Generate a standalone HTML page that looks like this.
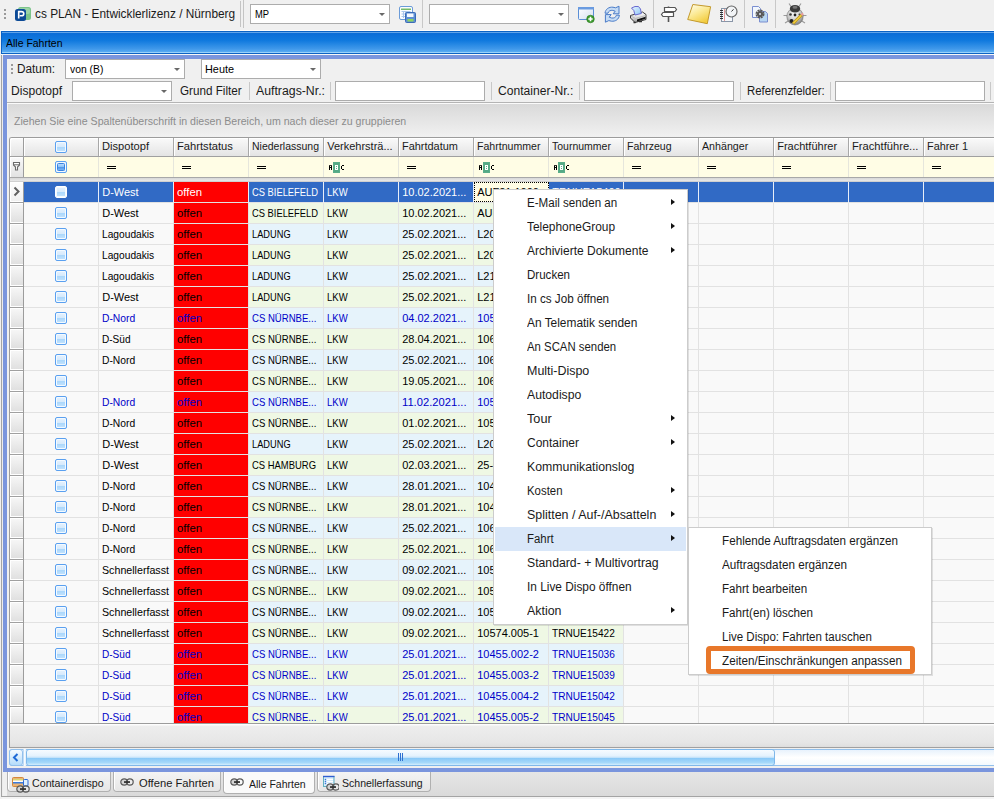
<!DOCTYPE html><html><head><meta charset="utf-8"><style>
*{margin:0;padding:0;box-sizing:border-box}
html,body{width:994px;height:799px;overflow:hidden;background:#f0f0f0;font-family:"Liberation Sans",sans-serif;color:#000;position:relative}
.a{position:absolute;display:block}
.t{position:absolute;white-space:nowrap;line-height:1}
.sep{position:absolute;width:2px;border-left:1px solid #c8c8c8;border-right:1px solid #fff}
.combo{position:absolute;background:#fff;border:1px solid #acacac}
.arr{position:absolute;width:0;height:0;border-left:3.5px solid transparent;border-right:3.5px solid transparent;border-top:3.5px solid #686868}
.cb{position:absolute;width:12px;height:12px;border:1px solid #5aa0f0;border-radius:2px;background:linear-gradient(#e6f2fe,#d6eafc 50%,#acd8fc 55%,#c6e4fd);box-shadow:inset 0 0 0 1px #f4faff}
.eq{position:absolute;width:9px;height:4px;border-top:1.5px solid #000;border-bottom:1.5px solid #000}
.mar{position:absolute;width:0;height:0;border-top:3.5px solid transparent;border-bottom:3.5px solid transparent;border-left:4px solid #111}
</style></head><body>
<div class="a" style="left:4px;top:9px;width:2px;height:2px;background:#9a9a9a"></div>
<div class="a" style="left:4px;top:13px;width:2px;height:2px;background:#9a9a9a"></div>
<div class="a" style="left:4px;top:17px;width:2px;height:2px;background:#9a9a9a"></div>
<svg class="a" style="left:14px;top:6px" width="18" height="16" viewBox="0 0 18 16"><rect x="4" y="1" width="13" height="13" rx="2.5" fill="#7cc48a"/><rect x="5" y="2" width="11" height="6" rx="2" fill="#a8dcb2" opacity=".7"/><rect x="1" y="3" width="11" height="12" rx="2.5" fill="#0c4a96"/><path d="M4.7 12.5V5.6h2.6c1.6 0 2.5.8 2.5 2.1s-.9 2.1-2.5 2.1H5.8" fill="none" stroke="#fff" stroke-width="1.6"/></svg>
<div class="t" style="left:35px;top:9px;font-size:11.85px;color:#1a1a1a;">cs PLAN - Entwicklerlizenz / Nürnberg</div>
<div class="a" style="left:240px;top:1px;width:1px;height:26px;background:#c4c4c4"></div>
<div class="a" style="left:243px;top:0px;width:1px;height:28px;background:#c4c4c4"></div>
<div class="combo" style="left:250px;top:4px;width:140px;height:20px"></div>
<div class="t" style="left:255px;top:9px;font-size:11.5px;color:#000;transform:scaleX(0.8116);transform-origin:0 0;">MP</div>
<div class="arr" style="left:379px;top:13px"></div>
<svg class="a" style="left:398px;top:5px" width="19" height="19" viewBox="0 0 19 19"><rect x="1.5" y="1.5" width="13" height="13" rx="1.5" fill="#fbfdff" stroke="#6b9bd8"/><rect x="3" y="3.5" width="10" height="1.5" fill="#76bb6a"/><path d="M3.5 6.5h9M3.5 9h9M3.5 11.5h9M5.5 6v7M8 6v7" stroke="#a9c6ec" stroke-width="1"/><rect x="7.5" y="7.5" width="10" height="10" rx="1" fill="#5d8fd4" stroke="#3a6ab8"/><rect x="9" y="8.5" width="6.5" height="3.5" fill="#f4f8ff"/><rect x="9.5" y="14" width="6" height="2.5" fill="#8fd45c"/></svg>
<div class="a" style="left:422px;top:0px;width:1px;height:28px;background:#c8c8c8"></div>
<div class="combo" style="left:429px;top:4px;width:140px;height:20px"></div>
<div class="arr" style="left:558px;top:13px"></div>
<svg class="a" style="left:577px;top:6px" width="19" height="18" viewBox="0 0 19 18"><defs><linearGradient id="wg" x1="0" y1="0" x2="1" y2="1"><stop offset="0" stop-color="#fff"/><stop offset="1" stop-color="#d4dff0"/></linearGradient></defs><rect x="1.5" y="1.5" width="15" height="12" rx="1" fill="url(#wg)" stroke="#5a8ed6"/><rect x="1" y="1" width="16" height="2.5" fill="#6a9be0"/><circle cx="13.5" cy="13" r="3.8" fill="#3c9a2e" stroke="#2a7a1e" stroke-width=".6"/><path d="M13.5 10.8v4.4M11.3 13h4.4" stroke="#fff" stroke-width="1.6"/></svg>
<svg class="a" style="left:603px;top:5px" width="18" height="18" viewBox="0 0 18 18"><path d="M2 8.2C2.4 4 6 1.8 10 2.2l2.6.6 3.4-1.6v7.6h-5.8l2-2.6-2.4-.8C7.6 5 5.4 6 5 8.2z" fill="#c6dcf5" stroke="#4a7cc8" stroke-width="1" stroke-linejoin="round"/><g transform="rotate(180 9.2 9.2)"><path d="M2 8.2C2.4 4 6 1.8 10 2.2l2.6.6 3.4-1.6v7.6h-5.8l2-2.6-2.4-.8C7.6 5 5.4 6 5 8.2z" fill="#c6dcf5" stroke="#4a7cc8" stroke-width="1" stroke-linejoin="round"/></g></svg>
<svg class="a" style="left:629px;top:5px" width="19" height="19" viewBox="0 0 19 19"><defs><linearGradient id="pg" x1="0" y1="0" x2="0" y2="1"><stop offset="0" stop-color="#ffffff"/><stop offset=".5" stop-color="#dedede"/><stop offset="1" stop-color="#9a9a9a"/></linearGradient><linearGradient id="pp" x1="0" y1="0" x2="1" y2="1"><stop offset="0" stop-color="#e8f6ff"/><stop offset="1" stop-color="#8cc4f4"/></linearGradient></defs><path d="M1.5 10.5L13.5 7l3.5 2.5v5L6 17.5 1.5 13z" fill="url(#pg)" stroke="#3a3a3a" stroke-width="1" stroke-linejoin="round"/><path d="M2.5 3L6 1.5h3.5l2 2.5.8 4.5-6.3 1.5-1.2-4.5z" fill="url(#pp)" stroke="#6a6ad0" stroke-width="1" stroke-linejoin="round"/><path d="M2 11l4.5 2.5L16.5 10.5" fill="none" stroke="#bbb" stroke-width="1"/><path d="M8 14.5l8.5-2.8v2L8 16.5z" fill="#111"/><path d="M4.5 17.5h2M10 16.5h3" stroke="#333" stroke-width="1.3"/></svg>
<div class="a" style="left:653px;top:0px;width:1px;height:28px;background:#c8c8c8"></div>
<svg class="a" style="left:660px;top:5px" width="18" height="18" viewBox="0 0 18 18"><path d="M8.5 1.5v15.5" stroke="#555" stroke-width="1.6"/><path d="M4.5 2.5h10.5l1.5 2-1.5 2h-10.5z" fill="#fff" stroke="#555" stroke-width="1.2"/><path d="M3 7.5h10.5v4h-10.5l-1.5-2z" fill="#fff" stroke="#555" stroke-width="1.2"/></svg>
<svg class="a" style="left:686px;top:3px" width="27" height="22" viewBox="0 0 27 22"><defs><linearGradient id="sg" x1="0" y1="0" x2="0.6" y2="1"><stop offset="0" stop-color="#fffef2"/><stop offset=".5" stop-color="#fbea96"/><stop offset="1" stop-color="#f2cc3e"/></linearGradient></defs><path d="M6.8 1.5l17.8 2.2-3.3 17-19.6-4.2z" fill="url(#sg)" stroke="#c49a2c" stroke-width="1"/></svg>
<svg class="a" style="left:719px;top:5px" width="20" height="18" viewBox="0 0 20 18"><rect x="2.5" y="3.5" width="11" height="13" fill="#f6f8fb" stroke="#8a96a8"/><path d="M1 5.5h3M1 7.5h3M1 9.5h3M1 11.5h3M1 13.5h3" stroke="#333" stroke-width="1"/><path d="M5.5 4v12" stroke="#e08080" stroke-width=".8"/><circle cx="12.5" cy="6.5" r="5.5" fill="#f2f4f6" stroke="#666" stroke-width="1.2"/><path d="M12.5 6.5l2-2.2" stroke="#333" stroke-width="1"/></svg>
<div class="a" style="left:744px;top:0px;width:1px;height:28px;background:#c8c8c8"></div>
<svg class="a" style="left:751px;top:5px" width="18" height="18" viewBox="0 0 18 18"><path d="M1.5 1.5h6l2 2v9h-8z" fill="#f2f7fd" stroke="#7a8ed0"/><path d="M8.5 6.5h6l2 2v8.5h-8z" fill="#b7d6f2" stroke="#7a8ed0"/><circle cx="9" cy="9" r="3.1" fill="#585858"/><circle cx="9" cy="9" r="3.7" fill="none" stroke="#585858" stroke-width="1.6" stroke-dasharray="2.1 0.8"/><circle cx="9" cy="9" r="1" fill="#dfe6f0"/></svg>
<div class="a" style="left:775px;top:0px;width:1px;height:28px;background:#c8c8c8"></div>
<svg class="a" style="left:782px;top:2px" width="26" height="24" viewBox="0 0 26 24"><defs><radialGradient id="bgr" cx=".45" cy=".35" r=".75"><stop offset="0" stop-color="#ffffff"/><stop offset=".55" stop-color="#c4c4c4"/><stop offset="1" stop-color="#5a5a5a"/></radialGradient></defs><path d="M7 1.5l3 4.5M19 1.5l-3 4.5M1.5 13.5h5M24.5 13.5h-5M3 21l4-2.5M23 21l-4-2.5" stroke="#9a9a9a" stroke-width="1.1"/><ellipse cx="13" cy="14.5" rx="8.2" ry="8.5" fill="url(#bgr)" stroke="#777" stroke-width=".6"/><ellipse cx="13" cy="6.8" rx="5.2" ry="3.8" fill="#3a3a3a"/><ellipse cx="13" cy="5.2" rx="2.5" ry="1.5" fill="#777"/><circle cx="8.5" cy="12.5" r="1.3" fill="#333"/><circle cx="13" cy="13" r="1.4" fill="#222"/><circle cx="9.5" cy="19" r="2" fill="#222"/><circle cx="17.5" cy="12.5" r="1" fill="#444"/><path d="M11 21.5l8.5-8.5" stroke="#b58f1a" stroke-width="3"/><path d="M11.3 21.2l8-8" stroke="#f2d040" stroke-width="1.6"/><path d="M19.5 13l1.5-1.5" stroke="#e99" stroke-width="2.2"/></svg>
<div class="a" style="left:1px;top:31px;width:995px;height:23px;border:1px solid #0c62c4;background:linear-gradient(#0a6ad6,#1079de 40%,#3f98ea 80%,#62b2f4);box-shadow:inset 0 1px 0 #62a4ea,inset 0 -1px 0 #9ad2fa"></div>
<div class="a" style="left:1px;top:54px;width:995px;height:1px;background:#f6f6f6"></div>
<div class="a" style="left:0px;top:30px;width:995px;height:1px;background:#fcfcfc"></div>
<div class="t" style="left:6px;top:38px;font-size:11px;color:#000;transform:scaleX(0.9526);transform-origin:0 0;">Alle Fahrten</div>
<div class="a" style="left:1px;top:55px;width:1px;height:742px;background:#a4a4a4"></div>
<div class="a" style="left:1px;top:796px;width:995px;height:1px;background:#a4a4a4"></div>
<div class="a" style="left:2px;top:797px;width:995px;height:2px;background:#f4f4f4"></div>
<div class="a" style="left:2px;top:55px;width:1px;height:741px;background:#ececec"></div>
<div class="a" style="left:3px;top:55px;width:995px;height:717px;background:#7a95dd"></div>
<div class="a" style="left:7px;top:59px;width:995px;height:709px;background:#f0f0f0"></div>
<div class="a" style="left:11px;top:64px;width:2px;height:2px;background:#9a9a9a"></div>
<div class="a" style="left:11px;top:68px;width:2px;height:2px;background:#9a9a9a"></div>
<div class="a" style="left:11px;top:72px;width:2px;height:2px;background:#9a9a9a"></div>
<div class="t" style="left:17px;top:63px;font-size:12px;color:#1a1a1a;transform:scaleX(0.9825);transform-origin:0 0;">Datum:</div>
<div class="combo" style="left:65px;top:59px;width:120px;height:20px"></div>
<div class="t" style="left:70px;top:64px;font-size:11.5px;color:#000;transform:scaleX(0.9011);transform-origin:0 0;">von (B)</div>
<div class="arr" style="left:174px;top:68px"></div>
<div class="combo" style="left:201px;top:59px;width:120px;height:20px"></div>
<div class="t" style="left:205px;top:64px;font-size:11.5px;color:#000;transform:scaleX(0.9450);transform-origin:0 0;">Heute</div>
<div class="arr" style="left:310px;top:68px"></div>
<div class="t" style="left:11px;top:85px;font-size:12px;color:#1a1a1a;transform:scaleX(1.0060);transform-origin:0 0;">Dispotopf</div>
<div class="combo" style="left:72px;top:81px;width:100px;height:20px"></div>
<div class="arr" style="left:161px;top:90px"></div>
<div class="t" style="left:180px;top:85px;font-size:12px;color:#1a1a1a;transform:scaleX(0.9723);transform-origin:0 0;">Grund Filter</div>
<div class="a" style="left:249px;top:82px;width:1px;height:18px;background:#c8c8c8"></div>
<div class="t" style="left:256px;top:85px;font-size:12px;color:#1a1a1a;transform:scaleX(1.0244);transform-origin:0 0;">Auftrags-Nr.:</div>
<div class="a" style="left:330px;top:82px;width:1px;height:18px;background:#c8c8c8"></div>
<div class="combo" style="left:335px;top:81px;width:150px;height:20px"></div>
<div class="a" style="left:491px;top:82px;width:1px;height:18px;background:#c8c8c8"></div>
<div class="t" style="left:498px;top:85px;font-size:12px;color:#1a1a1a;transform:scaleX(1.0081);transform-origin:0 0;">Container-Nr.:</div>
<div class="a" style="left:579px;top:82px;width:1px;height:18px;background:#c8c8c8"></div>
<div class="combo" style="left:584px;top:81px;width:150px;height:20px"></div>
<div class="a" style="left:740px;top:82px;width:1px;height:18px;background:#c8c8c8"></div>
<div class="t" style="left:747px;top:85px;font-size:12px;color:#1a1a1a;transform:scaleX(0.9470);transform-origin:0 0;">Referenzfelder:</div>
<div class="a" style="left:830px;top:82px;width:1px;height:18px;background:#c8c8c8"></div>
<div class="combo" style="left:835px;top:81px;width:150px;height:20px"></div>
<div class="a" style="left:990px;top:82px;width:1px;height:18px;background:#c8c8c8"></div>
<div class="a" style="left:7px;top:102px;width:995px;height:1px;background:#b4b4b4"></div>
<div class="a" style="left:7px;top:103px;width:995px;height:1px;background:#fafafa"></div>
<div class="a" style="left:8px;top:104px;width:995px;height:33px;background:linear-gradient(#d9d9d9,#f1f1f1)"></div>
<div class="t" style="left:14px;top:116px;font-size:10.6px;color:#8c8c8c;">Ziehen Sie eine Spaltenüberschrift in diesen Bereich, um nach dieser zu gruppieren</div>
<div class="a" style="left:9px;top:137px;width:995px;height:587px;background:#f9f9f9;border-top:1px solid #9c9c9c;border-left:1px solid #9c9c9c;border-radius:3px 0 0 0"></div>
<div class="a" style="left:10px;top:138px;width:13px;height:18px;background:linear-gradient(#fafafa,#f0f0f0 45%,#e4e4e4);box-shadow:inset 1px 1px 0 #fff;border-top-left-radius:2px"></div>
<div class="a" style="left:23px;top:138px;width:1px;height:19px;background:#9c9c9c"></div>
<div class="a" style="left:24px;top:138px;width:74px;height:18px;background:linear-gradient(#fafafa,#f0f0f0 45%,#e4e4e4);box-shadow:inset 1px 1px 0 #fff"></div>
<div class="a" style="left:98px;top:138px;width:1px;height:18px;background:#a8a8a8"></div>
<div class="a" style="left:99px;top:138px;width:74px;height:18px;background:linear-gradient(#fafafa,#f0f0f0 45%,#e4e4e4);box-shadow:inset 1px 1px 0 #fff"></div>
<div class="a" style="left:173px;top:138px;width:1px;height:18px;background:#a8a8a8"></div>
<div class="t" style="left:102.2px;top:141px;font-size:11px;color:#1a1a1a;transform:scaleX(1.0114);transform-origin:0 0;">Dispotopf</div>
<div class="a" style="left:174px;top:138px;width:74px;height:18px;background:linear-gradient(#fafafa,#f0f0f0 45%,#e4e4e4);box-shadow:inset 1px 1px 0 #fff"></div>
<div class="a" style="left:248px;top:138px;width:1px;height:18px;background:#a8a8a8"></div>
<div class="t" style="left:177.2px;top:141px;font-size:11px;color:#1a1a1a;transform:scaleX(1.0160);transform-origin:0 0;">Fahrtstatus</div>
<div class="a" style="left:249px;top:138px;width:74px;height:18px;background:linear-gradient(#fafafa,#f0f0f0 45%,#e4e4e4);box-shadow:inset 1px 1px 0 #fff"></div>
<div class="a" style="left:323px;top:138px;width:1px;height:18px;background:#a8a8a8"></div>
<div class="t" style="left:252.2px;top:141px;font-size:11px;color:#1a1a1a;transform:scaleX(0.9528);transform-origin:0 0;">Niederlassung</div>
<div class="a" style="left:324px;top:138px;width:74px;height:18px;background:linear-gradient(#fafafa,#f0f0f0 45%,#e4e4e4);box-shadow:inset 1px 1px 0 #fff"></div>
<div class="a" style="left:398px;top:138px;width:1px;height:18px;background:#a8a8a8"></div>
<div class="t" style="left:327.2px;top:141px;font-size:11px;color:#1a1a1a;">Verkehrsträ...</div>
<div class="a" style="left:399px;top:138px;width:74px;height:18px;background:linear-gradient(#fafafa,#f0f0f0 45%,#e4e4e4);box-shadow:inset 1px 1px 0 #fff"></div>
<div class="a" style="left:473px;top:138px;width:1px;height:18px;background:#a8a8a8"></div>
<div class="t" style="left:402.2px;top:141px;font-size:11px;color:#1a1a1a;transform:scaleX(0.9938);transform-origin:0 0;">Fahrtdatum</div>
<div class="a" style="left:474px;top:138px;width:74px;height:18px;background:linear-gradient(#fafafa,#f0f0f0 45%,#e4e4e4);box-shadow:inset 1px 1px 0 #fff"></div>
<div class="a" style="left:548px;top:138px;width:1px;height:18px;background:#a8a8a8"></div>
<div class="t" style="left:477.2px;top:141px;font-size:11px;color:#1a1a1a;transform:scaleX(0.9603);transform-origin:0 0;">Fahrtnummer</div>
<div class="a" style="left:549px;top:138px;width:74px;height:18px;background:linear-gradient(#fafafa,#f0f0f0 45%,#e4e4e4);box-shadow:inset 1px 1px 0 #fff"></div>
<div class="a" style="left:623px;top:138px;width:1px;height:18px;background:#a8a8a8"></div>
<div class="t" style="left:552.2px;top:141px;font-size:11px;color:#1a1a1a;transform:scaleX(0.9539);transform-origin:0 0;">Tournummer</div>
<div class="a" style="left:624px;top:138px;width:74px;height:18px;background:linear-gradient(#fafafa,#f0f0f0 45%,#e4e4e4);box-shadow:inset 1px 1px 0 #fff"></div>
<div class="a" style="left:698px;top:138px;width:1px;height:18px;background:#a8a8a8"></div>
<div class="t" style="left:627.2px;top:141px;font-size:11px;color:#1a1a1a;transform:scaleX(0.9597);transform-origin:0 0;">Fahrzeug</div>
<div class="a" style="left:699px;top:138px;width:74px;height:18px;background:linear-gradient(#fafafa,#f0f0f0 45%,#e4e4e4);box-shadow:inset 1px 1px 0 #fff"></div>
<div class="a" style="left:773px;top:138px;width:1px;height:18px;background:#a8a8a8"></div>
<div class="t" style="left:702.2px;top:141px;font-size:11px;color:#1a1a1a;transform:scaleX(0.9684);transform-origin:0 0;">Anhänger</div>
<div class="a" style="left:774px;top:138px;width:74px;height:18px;background:linear-gradient(#fafafa,#f0f0f0 45%,#e4e4e4);box-shadow:inset 1px 1px 0 #fff"></div>
<div class="a" style="left:848px;top:138px;width:1px;height:18px;background:#a8a8a8"></div>
<div class="t" style="left:777.2px;top:141px;font-size:11px;color:#1a1a1a;">Frachtführer</div>
<div class="a" style="left:849px;top:138px;width:74px;height:18px;background:linear-gradient(#fafafa,#f0f0f0 45%,#e4e4e4);box-shadow:inset 1px 1px 0 #fff"></div>
<div class="a" style="left:923px;top:138px;width:1px;height:18px;background:#a8a8a8"></div>
<div class="t" style="left:852.2px;top:141px;font-size:11px;color:#1a1a1a;transform:scaleX(1.0150);transform-origin:0 0;">Frachtführe...</div>
<div class="a" style="left:924px;top:138px;width:74px;height:18px;background:linear-gradient(#fafafa,#f0f0f0 45%,#e4e4e4);box-shadow:inset 1px 1px 0 #fff"></div>
<div class="a" style="left:998px;top:138px;width:1px;height:18px;background:#a8a8a8"></div>
<div class="t" style="left:927.2px;top:141px;font-size:11px;color:#1a1a1a;transform:scaleX(0.9862);transform-origin:0 0;">Fahrer 1</div>
<div class="a" style="left:10px;top:156px;width:995px;height:1px;background:#a0a0a0"></div>
<div class="cb" style="left:55px;top:141px"></div>
<div class="a" style="left:10px;top:157px;width:13px;height:20px;background:linear-gradient(#fafafa,#e2e2e2);box-shadow:inset 1px 1px 0 #fff"></div>
<div class="a" style="left:23px;top:157px;width:1px;height:20px;background:#9c9c9c"></div>
<svg class="a" style="left:12px;top:161px" width="9" height="10" viewBox="0 0 9 10"><path d="M1.5 1.5h6v2.5l-2 2v3h-2v-3l-2-2z" fill="#fff" stroke="#6a6a6a" stroke-width="1.1"/><path d="M1.5 3.8h6" stroke="#6a6a6a" stroke-width="1"/></svg>
<div class="a" style="left:24px;top:157px;width:995px;height:20px;background:#fffde5"></div>
<div class="a" style="left:98px;top:157px;width:1px;height:20px;background:#e6e6dc"></div>
<div class="a" style="left:173px;top:157px;width:1px;height:20px;background:#e6e6dc"></div>
<div class="a" style="left:248px;top:157px;width:1px;height:20px;background:#e6e6dc"></div>
<div class="a" style="left:323px;top:157px;width:1px;height:20px;background:#e6e6dc"></div>
<div class="a" style="left:398px;top:157px;width:1px;height:20px;background:#e6e6dc"></div>
<div class="a" style="left:473px;top:157px;width:1px;height:20px;background:#e6e6dc"></div>
<div class="a" style="left:548px;top:157px;width:1px;height:20px;background:#e6e6dc"></div>
<div class="a" style="left:623px;top:157px;width:1px;height:20px;background:#e6e6dc"></div>
<div class="a" style="left:698px;top:157px;width:1px;height:20px;background:#e6e6dc"></div>
<div class="a" style="left:773px;top:157px;width:1px;height:20px;background:#e6e6dc"></div>
<div class="a" style="left:848px;top:157px;width:1px;height:20px;background:#e6e6dc"></div>
<div class="a" style="left:923px;top:157px;width:1px;height:20px;background:#e6e6dc"></div>
<div class="a" style="left:998px;top:157px;width:1px;height:20px;background:#e6e6dc"></div>
<div class="cb" style="left:55px;top:161px"></div>
<div class="a" style="left:57px;top:163px;width:8px;height:8px;background:linear-gradient(#b8dafc,#8cc4f8 45%,#4f96ea 55%,#78b4f4);border:1px solid #3a84e0;border-radius:1.5px"></div>
<div class="a" style="left:107px;top:166px;width:9px;height:1px;background:#000"></div>
<div class="a" style="left:107px;top:168px;width:9px;height:1px;background:#000"></div>
<div class="a" style="left:182px;top:166px;width:9px;height:1px;background:#000"></div>
<div class="a" style="left:182px;top:168px;width:9px;height:1px;background:#000"></div>
<div class="a" style="left:257px;top:166px;width:9px;height:1px;background:#000"></div>
<div class="a" style="left:257px;top:168px;width:9px;height:1px;background:#000"></div>
<svg class="a" style="left:329px;top:162px" width="16" height="11" viewBox="0 0 16 11"><g shape-rendering="crispEdges"><rect x="4" y="0" width="7" height="11" fill="#5aae8a"/><rect x="5" y="1" width="5" height="9" fill="#4fa37f" opacity=".5"/><rect x="6" y="3" width="3" height="5" fill="#fff"/><rect x="7" y="4" width="1" height="1" fill="#5aae8a"/><rect x="7" y="6" width="1" height="1" fill="#5aae8a"/><rect x="0" y="4" width="1" height="4" fill="#000"/><rect x="2" y="4" width="1" height="4" fill="#000"/><rect x="0" y="3" width="3" height="1" fill="#000" opacity=".8"/><rect x="1" y="5" width="1" height="1" fill="#000"/><rect x="12" y="4" width="1" height="3" fill="#000"/><rect x="13" y="3" width="2" height="1" fill="#000"/><rect x="13" y="7" width="2" height="1" fill="#000"/></g></svg>
<div class="a" style="left:407px;top:166px;width:9px;height:1px;background:#000"></div>
<div class="a" style="left:407px;top:168px;width:9px;height:1px;background:#000"></div>
<svg class="a" style="left:479px;top:162px" width="16" height="11" viewBox="0 0 16 11"><g shape-rendering="crispEdges"><rect x="4" y="0" width="7" height="11" fill="#5aae8a"/><rect x="5" y="1" width="5" height="9" fill="#4fa37f" opacity=".5"/><rect x="6" y="3" width="3" height="5" fill="#fff"/><rect x="7" y="4" width="1" height="1" fill="#5aae8a"/><rect x="7" y="6" width="1" height="1" fill="#5aae8a"/><rect x="0" y="4" width="1" height="4" fill="#000"/><rect x="2" y="4" width="1" height="4" fill="#000"/><rect x="0" y="3" width="3" height="1" fill="#000" opacity=".8"/><rect x="1" y="5" width="1" height="1" fill="#000"/><rect x="12" y="4" width="1" height="3" fill="#000"/><rect x="13" y="3" width="2" height="1" fill="#000"/><rect x="13" y="7" width="2" height="1" fill="#000"/></g></svg>
<svg class="a" style="left:554px;top:162px" width="16" height="11" viewBox="0 0 16 11"><g shape-rendering="crispEdges"><rect x="4" y="0" width="7" height="11" fill="#5aae8a"/><rect x="5" y="1" width="5" height="9" fill="#4fa37f" opacity=".5"/><rect x="6" y="3" width="3" height="5" fill="#fff"/><rect x="7" y="4" width="1" height="1" fill="#5aae8a"/><rect x="7" y="6" width="1" height="1" fill="#5aae8a"/><rect x="0" y="4" width="1" height="4" fill="#000"/><rect x="2" y="4" width="1" height="4" fill="#000"/><rect x="0" y="3" width="3" height="1" fill="#000" opacity=".8"/><rect x="1" y="5" width="1" height="1" fill="#000"/><rect x="12" y="4" width="1" height="3" fill="#000"/><rect x="13" y="3" width="2" height="1" fill="#000"/><rect x="13" y="7" width="2" height="1" fill="#000"/></g></svg>
<div class="a" style="left:632px;top:166px;width:9px;height:1px;background:#000"></div>
<div class="a" style="left:632px;top:168px;width:9px;height:1px;background:#000"></div>
<div class="a" style="left:707px;top:166px;width:9px;height:1px;background:#000"></div>
<div class="a" style="left:707px;top:168px;width:9px;height:1px;background:#000"></div>
<div class="a" style="left:782px;top:166px;width:9px;height:1px;background:#000"></div>
<div class="a" style="left:782px;top:168px;width:9px;height:1px;background:#000"></div>
<div class="a" style="left:857px;top:166px;width:9px;height:1px;background:#000"></div>
<div class="a" style="left:857px;top:168px;width:9px;height:1px;background:#000"></div>
<div class="a" style="left:932px;top:166px;width:9px;height:1px;background:#000"></div>
<div class="a" style="left:932px;top:168px;width:9px;height:1px;background:#000"></div>
<div class="a" style="left:10px;top:177px;width:995px;height:1px;background:#a8a8a8"></div>
<div class="a" style="left:10px;top:178px;width:995px;height:3px;background:linear-gradient(#d8d8d8,#e8e8e8)"></div>
<div class="a" style="left:10px;top:181px;width:995px;height:1px;background:#d0d0d0"></div>
<div class="a" style="left:10px;top:182px;width:13px;height:20px;background:#fff"></div>
<div class="a" style="left:11px;top:183px;width:12px;height:18px;background:linear-gradient(#f6f6f6,#e0e0e0)"></div>
<div class="a" style="left:10px;top:202px;width:13px;height:1px;background:#a0a0a0"></div>
<div class="a" style="left:23px;top:182px;width:1px;height:21px;background:#9c9c9c"></div>
<div class="a" style="left:11px;top:183px;width:12px;height:18px;background:linear-gradient(#fdfdfd,#f0f0f0)"></div>
<svg class="a" style="left:12px;top:186px" width="9" height="11" viewBox="0 0 9 11"><path d="M2.5 1.5l4 4-4 4" fill="none" stroke="#606060" stroke-width="2"/></svg>
<div class="a" style="left:24px;top:182px;width:74px;height:20px;background:#316ac5"></div>
<div class="a" style="left:98px;top:182px;width:1px;height:21px;background:#e8eef8"></div>
<div class="a" style="left:24px;top:202px;width:74px;height:1px;background:#e2e2e2"></div>
<div class="a" style="left:99px;top:182px;width:74px;height:20px;background:#316ac5"></div>
<div class="a" style="left:173px;top:182px;width:1px;height:21px;background:#e8eef8"></div>
<div class="a" style="left:99px;top:202px;width:74px;height:1px;background:#e2e2e2"></div>
<div class="a" style="left:174px;top:182px;width:74px;height:20px;background:#ff0000"></div>
<div class="a" style="left:248px;top:182px;width:1px;height:21px;background:#e8eef8"></div>
<div class="a" style="left:174px;top:202px;width:74px;height:1px;background:#e2e2e2"></div>
<div class="a" style="left:249px;top:182px;width:74px;height:20px;background:#316ac5"></div>
<div class="a" style="left:323px;top:182px;width:1px;height:21px;background:#e8eef8"></div>
<div class="a" style="left:249px;top:202px;width:74px;height:1px;background:#e2e2e2"></div>
<div class="a" style="left:324px;top:182px;width:74px;height:20px;background:#316ac5"></div>
<div class="a" style="left:398px;top:182px;width:1px;height:21px;background:#e8eef8"></div>
<div class="a" style="left:324px;top:202px;width:74px;height:1px;background:#e2e2e2"></div>
<div class="a" style="left:399px;top:182px;width:74px;height:20px;background:#316ac5"></div>
<div class="a" style="left:473px;top:182px;width:1px;height:21px;background:#e8eef8"></div>
<div class="a" style="left:399px;top:202px;width:74px;height:1px;background:#e2e2e2"></div>
<div class="a" style="left:474px;top:182px;width:74px;height:20px;background:#fffde5"></div>
<div class="a" style="left:548px;top:182px;width:1px;height:21px;background:#e8eef8"></div>
<div class="a" style="left:474px;top:202px;width:74px;height:1px;background:#e2e2e2"></div>
<div class="a" style="left:549px;top:182px;width:74px;height:20px;background:#316ac5"></div>
<div class="a" style="left:623px;top:182px;width:1px;height:21px;background:#e8eef8"></div>
<div class="a" style="left:549px;top:202px;width:74px;height:1px;background:#e2e2e2"></div>
<div class="a" style="left:624px;top:182px;width:74px;height:20px;background:#316ac5"></div>
<div class="a" style="left:698px;top:182px;width:1px;height:21px;background:#e8eef8"></div>
<div class="a" style="left:624px;top:202px;width:74px;height:1px;background:#e2e2e2"></div>
<div class="a" style="left:699px;top:182px;width:74px;height:20px;background:#316ac5"></div>
<div class="a" style="left:773px;top:182px;width:1px;height:21px;background:#e8eef8"></div>
<div class="a" style="left:699px;top:202px;width:74px;height:1px;background:#e2e2e2"></div>
<div class="a" style="left:774px;top:182px;width:74px;height:20px;background:#316ac5"></div>
<div class="a" style="left:848px;top:182px;width:1px;height:21px;background:#e8eef8"></div>
<div class="a" style="left:774px;top:202px;width:74px;height:1px;background:#e2e2e2"></div>
<div class="a" style="left:849px;top:182px;width:74px;height:20px;background:#316ac5"></div>
<div class="a" style="left:923px;top:182px;width:1px;height:21px;background:#e8eef8"></div>
<div class="a" style="left:849px;top:202px;width:74px;height:1px;background:#e2e2e2"></div>
<div class="a" style="left:924px;top:182px;width:74px;height:20px;background:#316ac5"></div>
<div class="a" style="left:998px;top:182px;width:1px;height:21px;background:#e8eef8"></div>
<div class="a" style="left:924px;top:202px;width:74px;height:1px;background:#e2e2e2"></div>
<div class="a" style="left:474px;top:182px;width:75px;height:20px;border:1px dotted #000"></div>
<div class="cb" style="left:55px;top:186px;border-color:#fff"></div>
<div class="t" style="left:102.2px;top:187px;font-size:11px;color:#fff;">D-West</div>
<div class="t" style="left:177.2px;top:187px;font-size:11px;color:#fff;transform:scaleX(1.0302);transform-origin:0 0;">offen</div>
<div class="t" style="left:252.2px;top:187px;font-size:11px;color:#fff;transform:scaleX(0.8501);transform-origin:0 0;">CS BIELEFELD</div>
<div class="t" style="left:327.2px;top:187px;font-size:11px;color:#fff;transform:scaleX(0.8642);transform-origin:0 0;">LKW</div>
<div class="t" style="left:402.2px;top:187px;font-size:11px;color:#fff;">10.02.2021...</div>
<div class="t" style="left:477.2px;top:187px;font-size:11px;color:#000;">AUF21.1000</div>
<div class="t" style="left:552.2px;top:187px;font-size:11px;color:#fff;">TRNUE15400</div>
<div class="a" style="left:10px;top:203px;width:13px;height:20px;background:#fff"></div>
<div class="a" style="left:11px;top:204px;width:12px;height:18px;background:linear-gradient(#f6f6f6,#e0e0e0)"></div>
<div class="a" style="left:10px;top:223px;width:13px;height:1px;background:#a0a0a0"></div>
<div class="a" style="left:23px;top:203px;width:1px;height:21px;background:#9c9c9c"></div>
<div class="a" style="left:24px;top:203px;width:74px;height:20px;background:#f9f9f9"></div>
<div class="a" style="left:98px;top:203px;width:1px;height:21px;background:#e2e2e2"></div>
<div class="a" style="left:24px;top:223px;width:74px;height:1px;background:#e2e2e2"></div>
<div class="a" style="left:99px;top:203px;width:74px;height:20px;background:#f9f9f9"></div>
<div class="a" style="left:173px;top:203px;width:1px;height:21px;background:#e2e2e2"></div>
<div class="a" style="left:99px;top:223px;width:74px;height:1px;background:#e2e2e2"></div>
<div class="a" style="left:174px;top:203px;width:74px;height:20px;background:#ff0000"></div>
<div class="a" style="left:248px;top:203px;width:1px;height:21px;background:#e2e2e2"></div>
<div class="a" style="left:174px;top:223px;width:74px;height:1px;background:#e2e2e2"></div>
<div class="a" style="left:249px;top:203px;width:74px;height:20px;background:#eff8e4"></div>
<div class="a" style="left:323px;top:203px;width:1px;height:21px;background:#e2e2e2"></div>
<div class="a" style="left:249px;top:223px;width:74px;height:1px;background:#e2e2e2"></div>
<div class="a" style="left:324px;top:203px;width:74px;height:20px;background:#eff8e4"></div>
<div class="a" style="left:398px;top:203px;width:1px;height:21px;background:#e2e2e2"></div>
<div class="a" style="left:324px;top:223px;width:74px;height:1px;background:#e2e2e2"></div>
<div class="a" style="left:399px;top:203px;width:74px;height:20px;background:#eff8e4"></div>
<div class="a" style="left:473px;top:203px;width:1px;height:21px;background:#e2e2e2"></div>
<div class="a" style="left:399px;top:223px;width:74px;height:1px;background:#e2e2e2"></div>
<div class="a" style="left:474px;top:203px;width:74px;height:20px;background:#eff8e4"></div>
<div class="a" style="left:548px;top:203px;width:1px;height:21px;background:#e2e2e2"></div>
<div class="a" style="left:474px;top:223px;width:74px;height:1px;background:#e2e2e2"></div>
<div class="a" style="left:549px;top:203px;width:74px;height:20px;background:#eff8e4"></div>
<div class="a" style="left:623px;top:203px;width:1px;height:21px;background:#e2e2e2"></div>
<div class="a" style="left:549px;top:223px;width:74px;height:1px;background:#e2e2e2"></div>
<div class="a" style="left:624px;top:203px;width:74px;height:20px;background:#f9f9f9"></div>
<div class="a" style="left:698px;top:203px;width:1px;height:21px;background:#e2e2e2"></div>
<div class="a" style="left:624px;top:223px;width:74px;height:1px;background:#e2e2e2"></div>
<div class="a" style="left:699px;top:203px;width:74px;height:20px;background:#f9f9f9"></div>
<div class="a" style="left:773px;top:203px;width:1px;height:21px;background:#e2e2e2"></div>
<div class="a" style="left:699px;top:223px;width:74px;height:1px;background:#e2e2e2"></div>
<div class="a" style="left:774px;top:203px;width:74px;height:20px;background:#f9f9f9"></div>
<div class="a" style="left:848px;top:203px;width:1px;height:21px;background:#e2e2e2"></div>
<div class="a" style="left:774px;top:223px;width:74px;height:1px;background:#e2e2e2"></div>
<div class="a" style="left:849px;top:203px;width:74px;height:20px;background:#f9f9f9"></div>
<div class="a" style="left:923px;top:203px;width:1px;height:21px;background:#e2e2e2"></div>
<div class="a" style="left:849px;top:223px;width:74px;height:1px;background:#e2e2e2"></div>
<div class="a" style="left:924px;top:203px;width:74px;height:20px;background:#f9f9f9"></div>
<div class="a" style="left:998px;top:203px;width:1px;height:21px;background:#e2e2e2"></div>
<div class="a" style="left:924px;top:223px;width:74px;height:1px;background:#e2e2e2"></div>
<div class="cb" style="left:55px;top:207px"></div>
<div class="t" style="left:102.2px;top:208px;font-size:11px;color:#000;">D-West</div>
<div class="t" style="left:177.2px;top:208px;font-size:11px;color:#000;transform:scaleX(1.0302);transform-origin:0 0;">offen</div>
<div class="t" style="left:252.2px;top:208px;font-size:11px;color:#000;transform:scaleX(0.8501);transform-origin:0 0;">CS BIELEFELD</div>
<div class="t" style="left:327.2px;top:208px;font-size:11px;color:#000;transform:scaleX(0.8642);transform-origin:0 0;">LKW</div>
<div class="t" style="left:402.2px;top:208px;font-size:11px;color:#000;">10.02.2021...</div>
<div class="t" style="left:477.2px;top:208px;font-size:11px;color:#000;">AUF21.1001</div>
<div class="t" style="left:552.2px;top:208px;font-size:11px;color:#000;">TRNUE15401</div>
<div class="a" style="left:10px;top:224px;width:13px;height:20px;background:#fff"></div>
<div class="a" style="left:11px;top:225px;width:12px;height:18px;background:linear-gradient(#f6f6f6,#e0e0e0)"></div>
<div class="a" style="left:10px;top:244px;width:13px;height:1px;background:#a0a0a0"></div>
<div class="a" style="left:23px;top:224px;width:1px;height:21px;background:#9c9c9c"></div>
<div class="a" style="left:24px;top:224px;width:74px;height:20px;background:#f9f9f9"></div>
<div class="a" style="left:98px;top:224px;width:1px;height:21px;background:#e2e2e2"></div>
<div class="a" style="left:24px;top:244px;width:74px;height:1px;background:#e2e2e2"></div>
<div class="a" style="left:99px;top:224px;width:74px;height:20px;background:#f9f9f9"></div>
<div class="a" style="left:173px;top:224px;width:1px;height:21px;background:#e2e2e2"></div>
<div class="a" style="left:99px;top:244px;width:74px;height:1px;background:#e2e2e2"></div>
<div class="a" style="left:174px;top:224px;width:74px;height:20px;background:#ff0000"></div>
<div class="a" style="left:248px;top:224px;width:1px;height:21px;background:#e2e2e2"></div>
<div class="a" style="left:174px;top:244px;width:74px;height:1px;background:#e2e2e2"></div>
<div class="a" style="left:249px;top:224px;width:74px;height:20px;background:#e6f3fb"></div>
<div class="a" style="left:323px;top:224px;width:1px;height:21px;background:#e2e2e2"></div>
<div class="a" style="left:249px;top:244px;width:74px;height:1px;background:#e2e2e2"></div>
<div class="a" style="left:324px;top:224px;width:74px;height:20px;background:#e6f3fb"></div>
<div class="a" style="left:398px;top:224px;width:1px;height:21px;background:#e2e2e2"></div>
<div class="a" style="left:324px;top:244px;width:74px;height:1px;background:#e2e2e2"></div>
<div class="a" style="left:399px;top:224px;width:74px;height:20px;background:#e6f3fb"></div>
<div class="a" style="left:473px;top:224px;width:1px;height:21px;background:#e2e2e2"></div>
<div class="a" style="left:399px;top:244px;width:74px;height:1px;background:#e2e2e2"></div>
<div class="a" style="left:474px;top:224px;width:74px;height:20px;background:#e6f3fb"></div>
<div class="a" style="left:548px;top:224px;width:1px;height:21px;background:#e2e2e2"></div>
<div class="a" style="left:474px;top:244px;width:74px;height:1px;background:#e2e2e2"></div>
<div class="a" style="left:549px;top:224px;width:74px;height:20px;background:#e6f3fb"></div>
<div class="a" style="left:623px;top:224px;width:1px;height:21px;background:#e2e2e2"></div>
<div class="a" style="left:549px;top:244px;width:74px;height:1px;background:#e2e2e2"></div>
<div class="a" style="left:624px;top:224px;width:74px;height:20px;background:#f9f9f9"></div>
<div class="a" style="left:698px;top:224px;width:1px;height:21px;background:#e2e2e2"></div>
<div class="a" style="left:624px;top:244px;width:74px;height:1px;background:#e2e2e2"></div>
<div class="a" style="left:699px;top:224px;width:74px;height:20px;background:#f9f9f9"></div>
<div class="a" style="left:773px;top:224px;width:1px;height:21px;background:#e2e2e2"></div>
<div class="a" style="left:699px;top:244px;width:74px;height:1px;background:#e2e2e2"></div>
<div class="a" style="left:774px;top:224px;width:74px;height:20px;background:#f9f9f9"></div>
<div class="a" style="left:848px;top:224px;width:1px;height:21px;background:#e2e2e2"></div>
<div class="a" style="left:774px;top:244px;width:74px;height:1px;background:#e2e2e2"></div>
<div class="a" style="left:849px;top:224px;width:74px;height:20px;background:#f9f9f9"></div>
<div class="a" style="left:923px;top:224px;width:1px;height:21px;background:#e2e2e2"></div>
<div class="a" style="left:849px;top:244px;width:74px;height:1px;background:#e2e2e2"></div>
<div class="a" style="left:924px;top:224px;width:74px;height:20px;background:#f9f9f9"></div>
<div class="a" style="left:998px;top:224px;width:1px;height:21px;background:#e2e2e2"></div>
<div class="a" style="left:924px;top:244px;width:74px;height:1px;background:#e2e2e2"></div>
<div class="cb" style="left:55px;top:228px"></div>
<div class="t" style="left:102.2px;top:229px;font-size:11px;color:#000;transform:scaleX(0.9277);transform-origin:0 0;">Lagoudakis</div>
<div class="t" style="left:177.2px;top:229px;font-size:11px;color:#000;transform:scaleX(1.0302);transform-origin:0 0;">offen</div>
<div class="t" style="left:252.2px;top:229px;font-size:11px;color:#000;transform:scaleX(0.8420);transform-origin:0 0;">LADUNG</div>
<div class="t" style="left:327.2px;top:229px;font-size:11px;color:#000;transform:scaleX(0.8642);transform-origin:0 0;">LKW</div>
<div class="t" style="left:402.2px;top:229px;font-size:11px;color:#000;">25.02.2021...</div>
<div class="t" style="left:477.2px;top:229px;font-size:11px;color:#000;">L20210225</div>
<div class="a" style="left:10px;top:245px;width:13px;height:20px;background:#fff"></div>
<div class="a" style="left:11px;top:246px;width:12px;height:18px;background:linear-gradient(#f6f6f6,#e0e0e0)"></div>
<div class="a" style="left:10px;top:265px;width:13px;height:1px;background:#a0a0a0"></div>
<div class="a" style="left:23px;top:245px;width:1px;height:21px;background:#9c9c9c"></div>
<div class="a" style="left:24px;top:245px;width:74px;height:20px;background:#f9f9f9"></div>
<div class="a" style="left:98px;top:245px;width:1px;height:21px;background:#e2e2e2"></div>
<div class="a" style="left:24px;top:265px;width:74px;height:1px;background:#e2e2e2"></div>
<div class="a" style="left:99px;top:245px;width:74px;height:20px;background:#f9f9f9"></div>
<div class="a" style="left:173px;top:245px;width:1px;height:21px;background:#e2e2e2"></div>
<div class="a" style="left:99px;top:265px;width:74px;height:1px;background:#e2e2e2"></div>
<div class="a" style="left:174px;top:245px;width:74px;height:20px;background:#ff0000"></div>
<div class="a" style="left:248px;top:245px;width:1px;height:21px;background:#e2e2e2"></div>
<div class="a" style="left:174px;top:265px;width:74px;height:1px;background:#e2e2e2"></div>
<div class="a" style="left:249px;top:245px;width:74px;height:20px;background:#eff8e4"></div>
<div class="a" style="left:323px;top:245px;width:1px;height:21px;background:#e2e2e2"></div>
<div class="a" style="left:249px;top:265px;width:74px;height:1px;background:#e2e2e2"></div>
<div class="a" style="left:324px;top:245px;width:74px;height:20px;background:#eff8e4"></div>
<div class="a" style="left:398px;top:245px;width:1px;height:21px;background:#e2e2e2"></div>
<div class="a" style="left:324px;top:265px;width:74px;height:1px;background:#e2e2e2"></div>
<div class="a" style="left:399px;top:245px;width:74px;height:20px;background:#eff8e4"></div>
<div class="a" style="left:473px;top:245px;width:1px;height:21px;background:#e2e2e2"></div>
<div class="a" style="left:399px;top:265px;width:74px;height:1px;background:#e2e2e2"></div>
<div class="a" style="left:474px;top:245px;width:74px;height:20px;background:#eff8e4"></div>
<div class="a" style="left:548px;top:245px;width:1px;height:21px;background:#e2e2e2"></div>
<div class="a" style="left:474px;top:265px;width:74px;height:1px;background:#e2e2e2"></div>
<div class="a" style="left:549px;top:245px;width:74px;height:20px;background:#eff8e4"></div>
<div class="a" style="left:623px;top:245px;width:1px;height:21px;background:#e2e2e2"></div>
<div class="a" style="left:549px;top:265px;width:74px;height:1px;background:#e2e2e2"></div>
<div class="a" style="left:624px;top:245px;width:74px;height:20px;background:#f9f9f9"></div>
<div class="a" style="left:698px;top:245px;width:1px;height:21px;background:#e2e2e2"></div>
<div class="a" style="left:624px;top:265px;width:74px;height:1px;background:#e2e2e2"></div>
<div class="a" style="left:699px;top:245px;width:74px;height:20px;background:#f9f9f9"></div>
<div class="a" style="left:773px;top:245px;width:1px;height:21px;background:#e2e2e2"></div>
<div class="a" style="left:699px;top:265px;width:74px;height:1px;background:#e2e2e2"></div>
<div class="a" style="left:774px;top:245px;width:74px;height:20px;background:#f9f9f9"></div>
<div class="a" style="left:848px;top:245px;width:1px;height:21px;background:#e2e2e2"></div>
<div class="a" style="left:774px;top:265px;width:74px;height:1px;background:#e2e2e2"></div>
<div class="a" style="left:849px;top:245px;width:74px;height:20px;background:#f9f9f9"></div>
<div class="a" style="left:923px;top:245px;width:1px;height:21px;background:#e2e2e2"></div>
<div class="a" style="left:849px;top:265px;width:74px;height:1px;background:#e2e2e2"></div>
<div class="a" style="left:924px;top:245px;width:74px;height:20px;background:#f9f9f9"></div>
<div class="a" style="left:998px;top:245px;width:1px;height:21px;background:#e2e2e2"></div>
<div class="a" style="left:924px;top:265px;width:74px;height:1px;background:#e2e2e2"></div>
<div class="cb" style="left:55px;top:249px"></div>
<div class="t" style="left:102.2px;top:250px;font-size:11px;color:#000;transform:scaleX(0.9277);transform-origin:0 0;">Lagoudakis</div>
<div class="t" style="left:177.2px;top:250px;font-size:11px;color:#000;transform:scaleX(1.0302);transform-origin:0 0;">offen</div>
<div class="t" style="left:252.2px;top:250px;font-size:11px;color:#000;transform:scaleX(0.8420);transform-origin:0 0;">LADUNG</div>
<div class="t" style="left:327.2px;top:250px;font-size:11px;color:#000;transform:scaleX(0.8642);transform-origin:0 0;">LKW</div>
<div class="t" style="left:402.2px;top:250px;font-size:11px;color:#000;">25.02.2021...</div>
<div class="t" style="left:477.2px;top:250px;font-size:11px;color:#000;">L20210226</div>
<div class="a" style="left:10px;top:266px;width:13px;height:20px;background:#fff"></div>
<div class="a" style="left:11px;top:267px;width:12px;height:18px;background:linear-gradient(#f6f6f6,#e0e0e0)"></div>
<div class="a" style="left:10px;top:286px;width:13px;height:1px;background:#a0a0a0"></div>
<div class="a" style="left:23px;top:266px;width:1px;height:21px;background:#9c9c9c"></div>
<div class="a" style="left:24px;top:266px;width:74px;height:20px;background:#f9f9f9"></div>
<div class="a" style="left:98px;top:266px;width:1px;height:21px;background:#e2e2e2"></div>
<div class="a" style="left:24px;top:286px;width:74px;height:1px;background:#e2e2e2"></div>
<div class="a" style="left:99px;top:266px;width:74px;height:20px;background:#f9f9f9"></div>
<div class="a" style="left:173px;top:266px;width:1px;height:21px;background:#e2e2e2"></div>
<div class="a" style="left:99px;top:286px;width:74px;height:1px;background:#e2e2e2"></div>
<div class="a" style="left:174px;top:266px;width:74px;height:20px;background:#ff0000"></div>
<div class="a" style="left:248px;top:266px;width:1px;height:21px;background:#e2e2e2"></div>
<div class="a" style="left:174px;top:286px;width:74px;height:1px;background:#e2e2e2"></div>
<div class="a" style="left:249px;top:266px;width:74px;height:20px;background:#e6f3fb"></div>
<div class="a" style="left:323px;top:266px;width:1px;height:21px;background:#e2e2e2"></div>
<div class="a" style="left:249px;top:286px;width:74px;height:1px;background:#e2e2e2"></div>
<div class="a" style="left:324px;top:266px;width:74px;height:20px;background:#e6f3fb"></div>
<div class="a" style="left:398px;top:266px;width:1px;height:21px;background:#e2e2e2"></div>
<div class="a" style="left:324px;top:286px;width:74px;height:1px;background:#e2e2e2"></div>
<div class="a" style="left:399px;top:266px;width:74px;height:20px;background:#e6f3fb"></div>
<div class="a" style="left:473px;top:266px;width:1px;height:21px;background:#e2e2e2"></div>
<div class="a" style="left:399px;top:286px;width:74px;height:1px;background:#e2e2e2"></div>
<div class="a" style="left:474px;top:266px;width:74px;height:20px;background:#e6f3fb"></div>
<div class="a" style="left:548px;top:266px;width:1px;height:21px;background:#e2e2e2"></div>
<div class="a" style="left:474px;top:286px;width:74px;height:1px;background:#e2e2e2"></div>
<div class="a" style="left:549px;top:266px;width:74px;height:20px;background:#e6f3fb"></div>
<div class="a" style="left:623px;top:266px;width:1px;height:21px;background:#e2e2e2"></div>
<div class="a" style="left:549px;top:286px;width:74px;height:1px;background:#e2e2e2"></div>
<div class="a" style="left:624px;top:266px;width:74px;height:20px;background:#f9f9f9"></div>
<div class="a" style="left:698px;top:266px;width:1px;height:21px;background:#e2e2e2"></div>
<div class="a" style="left:624px;top:286px;width:74px;height:1px;background:#e2e2e2"></div>
<div class="a" style="left:699px;top:266px;width:74px;height:20px;background:#f9f9f9"></div>
<div class="a" style="left:773px;top:266px;width:1px;height:21px;background:#e2e2e2"></div>
<div class="a" style="left:699px;top:286px;width:74px;height:1px;background:#e2e2e2"></div>
<div class="a" style="left:774px;top:266px;width:74px;height:20px;background:#f9f9f9"></div>
<div class="a" style="left:848px;top:266px;width:1px;height:21px;background:#e2e2e2"></div>
<div class="a" style="left:774px;top:286px;width:74px;height:1px;background:#e2e2e2"></div>
<div class="a" style="left:849px;top:266px;width:74px;height:20px;background:#f9f9f9"></div>
<div class="a" style="left:923px;top:266px;width:1px;height:21px;background:#e2e2e2"></div>
<div class="a" style="left:849px;top:286px;width:74px;height:1px;background:#e2e2e2"></div>
<div class="a" style="left:924px;top:266px;width:74px;height:20px;background:#f9f9f9"></div>
<div class="a" style="left:998px;top:266px;width:1px;height:21px;background:#e2e2e2"></div>
<div class="a" style="left:924px;top:286px;width:74px;height:1px;background:#e2e2e2"></div>
<div class="cb" style="left:55px;top:270px"></div>
<div class="t" style="left:102.2px;top:271px;font-size:11px;color:#000;transform:scaleX(0.9277);transform-origin:0 0;">Lagoudakis</div>
<div class="t" style="left:177.2px;top:271px;font-size:11px;color:#000;transform:scaleX(1.0302);transform-origin:0 0;">offen</div>
<div class="t" style="left:252.2px;top:271px;font-size:11px;color:#000;transform:scaleX(0.8420);transform-origin:0 0;">LADUNG</div>
<div class="t" style="left:327.2px;top:271px;font-size:11px;color:#000;transform:scaleX(0.8642);transform-origin:0 0;">LKW</div>
<div class="t" style="left:402.2px;top:271px;font-size:11px;color:#000;">25.02.2021...</div>
<div class="t" style="left:477.2px;top:271px;font-size:11px;color:#000;">L21021001</div>
<div class="a" style="left:10px;top:287px;width:13px;height:20px;background:#fff"></div>
<div class="a" style="left:11px;top:288px;width:12px;height:18px;background:linear-gradient(#f6f6f6,#e0e0e0)"></div>
<div class="a" style="left:10px;top:307px;width:13px;height:1px;background:#a0a0a0"></div>
<div class="a" style="left:23px;top:287px;width:1px;height:21px;background:#9c9c9c"></div>
<div class="a" style="left:24px;top:287px;width:74px;height:20px;background:#f9f9f9"></div>
<div class="a" style="left:98px;top:287px;width:1px;height:21px;background:#e2e2e2"></div>
<div class="a" style="left:24px;top:307px;width:74px;height:1px;background:#e2e2e2"></div>
<div class="a" style="left:99px;top:287px;width:74px;height:20px;background:#f9f9f9"></div>
<div class="a" style="left:173px;top:287px;width:1px;height:21px;background:#e2e2e2"></div>
<div class="a" style="left:99px;top:307px;width:74px;height:1px;background:#e2e2e2"></div>
<div class="a" style="left:174px;top:287px;width:74px;height:20px;background:#ff0000"></div>
<div class="a" style="left:248px;top:287px;width:1px;height:21px;background:#e2e2e2"></div>
<div class="a" style="left:174px;top:307px;width:74px;height:1px;background:#e2e2e2"></div>
<div class="a" style="left:249px;top:287px;width:74px;height:20px;background:#eff8e4"></div>
<div class="a" style="left:323px;top:287px;width:1px;height:21px;background:#e2e2e2"></div>
<div class="a" style="left:249px;top:307px;width:74px;height:1px;background:#e2e2e2"></div>
<div class="a" style="left:324px;top:287px;width:74px;height:20px;background:#eff8e4"></div>
<div class="a" style="left:398px;top:287px;width:1px;height:21px;background:#e2e2e2"></div>
<div class="a" style="left:324px;top:307px;width:74px;height:1px;background:#e2e2e2"></div>
<div class="a" style="left:399px;top:287px;width:74px;height:20px;background:#eff8e4"></div>
<div class="a" style="left:473px;top:287px;width:1px;height:21px;background:#e2e2e2"></div>
<div class="a" style="left:399px;top:307px;width:74px;height:1px;background:#e2e2e2"></div>
<div class="a" style="left:474px;top:287px;width:74px;height:20px;background:#eff8e4"></div>
<div class="a" style="left:548px;top:287px;width:1px;height:21px;background:#e2e2e2"></div>
<div class="a" style="left:474px;top:307px;width:74px;height:1px;background:#e2e2e2"></div>
<div class="a" style="left:549px;top:287px;width:74px;height:20px;background:#eff8e4"></div>
<div class="a" style="left:623px;top:287px;width:1px;height:21px;background:#e2e2e2"></div>
<div class="a" style="left:549px;top:307px;width:74px;height:1px;background:#e2e2e2"></div>
<div class="a" style="left:624px;top:287px;width:74px;height:20px;background:#f9f9f9"></div>
<div class="a" style="left:698px;top:287px;width:1px;height:21px;background:#e2e2e2"></div>
<div class="a" style="left:624px;top:307px;width:74px;height:1px;background:#e2e2e2"></div>
<div class="a" style="left:699px;top:287px;width:74px;height:20px;background:#f9f9f9"></div>
<div class="a" style="left:773px;top:287px;width:1px;height:21px;background:#e2e2e2"></div>
<div class="a" style="left:699px;top:307px;width:74px;height:1px;background:#e2e2e2"></div>
<div class="a" style="left:774px;top:287px;width:74px;height:20px;background:#f9f9f9"></div>
<div class="a" style="left:848px;top:287px;width:1px;height:21px;background:#e2e2e2"></div>
<div class="a" style="left:774px;top:307px;width:74px;height:1px;background:#e2e2e2"></div>
<div class="a" style="left:849px;top:287px;width:74px;height:20px;background:#f9f9f9"></div>
<div class="a" style="left:923px;top:287px;width:1px;height:21px;background:#e2e2e2"></div>
<div class="a" style="left:849px;top:307px;width:74px;height:1px;background:#e2e2e2"></div>
<div class="a" style="left:924px;top:287px;width:74px;height:20px;background:#f9f9f9"></div>
<div class="a" style="left:998px;top:287px;width:1px;height:21px;background:#e2e2e2"></div>
<div class="a" style="left:924px;top:307px;width:74px;height:1px;background:#e2e2e2"></div>
<div class="cb" style="left:55px;top:291px"></div>
<div class="t" style="left:102.2px;top:292px;font-size:11px;color:#000;">D-West</div>
<div class="t" style="left:177.2px;top:292px;font-size:11px;color:#000;transform:scaleX(1.0302);transform-origin:0 0;">offen</div>
<div class="t" style="left:252.2px;top:292px;font-size:11px;color:#000;transform:scaleX(0.8420);transform-origin:0 0;">LADUNG</div>
<div class="t" style="left:327.2px;top:292px;font-size:11px;color:#000;transform:scaleX(0.8642);transform-origin:0 0;">LKW</div>
<div class="t" style="left:402.2px;top:292px;font-size:11px;color:#000;">25.02.2021...</div>
<div class="t" style="left:477.2px;top:292px;font-size:11px;color:#000;">L21021002</div>
<div class="a" style="left:10px;top:308px;width:13px;height:20px;background:#fff"></div>
<div class="a" style="left:11px;top:309px;width:12px;height:18px;background:linear-gradient(#f6f6f6,#e0e0e0)"></div>
<div class="a" style="left:10px;top:328px;width:13px;height:1px;background:#a0a0a0"></div>
<div class="a" style="left:23px;top:308px;width:1px;height:21px;background:#9c9c9c"></div>
<div class="a" style="left:24px;top:308px;width:74px;height:20px;background:#f9f9f9"></div>
<div class="a" style="left:98px;top:308px;width:1px;height:21px;background:#e2e2e2"></div>
<div class="a" style="left:24px;top:328px;width:74px;height:1px;background:#e2e2e2"></div>
<div class="a" style="left:99px;top:308px;width:74px;height:20px;background:#f9f9f9"></div>
<div class="a" style="left:173px;top:308px;width:1px;height:21px;background:#e2e2e2"></div>
<div class="a" style="left:99px;top:328px;width:74px;height:1px;background:#e2e2e2"></div>
<div class="a" style="left:174px;top:308px;width:74px;height:20px;background:#ff0000"></div>
<div class="a" style="left:248px;top:308px;width:1px;height:21px;background:#e2e2e2"></div>
<div class="a" style="left:174px;top:328px;width:74px;height:1px;background:#e2e2e2"></div>
<div class="a" style="left:249px;top:308px;width:74px;height:20px;background:#e6f3fb"></div>
<div class="a" style="left:323px;top:308px;width:1px;height:21px;background:#e2e2e2"></div>
<div class="a" style="left:249px;top:328px;width:74px;height:1px;background:#e2e2e2"></div>
<div class="a" style="left:324px;top:308px;width:74px;height:20px;background:#e6f3fb"></div>
<div class="a" style="left:398px;top:308px;width:1px;height:21px;background:#e2e2e2"></div>
<div class="a" style="left:324px;top:328px;width:74px;height:1px;background:#e2e2e2"></div>
<div class="a" style="left:399px;top:308px;width:74px;height:20px;background:#e6f3fb"></div>
<div class="a" style="left:473px;top:308px;width:1px;height:21px;background:#e2e2e2"></div>
<div class="a" style="left:399px;top:328px;width:74px;height:1px;background:#e2e2e2"></div>
<div class="a" style="left:474px;top:308px;width:74px;height:20px;background:#e6f3fb"></div>
<div class="a" style="left:548px;top:308px;width:1px;height:21px;background:#e2e2e2"></div>
<div class="a" style="left:474px;top:328px;width:74px;height:1px;background:#e2e2e2"></div>
<div class="a" style="left:549px;top:308px;width:74px;height:20px;background:#e6f3fb"></div>
<div class="a" style="left:623px;top:308px;width:1px;height:21px;background:#e2e2e2"></div>
<div class="a" style="left:549px;top:328px;width:74px;height:1px;background:#e2e2e2"></div>
<div class="a" style="left:624px;top:308px;width:74px;height:20px;background:#f9f9f9"></div>
<div class="a" style="left:698px;top:308px;width:1px;height:21px;background:#e2e2e2"></div>
<div class="a" style="left:624px;top:328px;width:74px;height:1px;background:#e2e2e2"></div>
<div class="a" style="left:699px;top:308px;width:74px;height:20px;background:#f9f9f9"></div>
<div class="a" style="left:773px;top:308px;width:1px;height:21px;background:#e2e2e2"></div>
<div class="a" style="left:699px;top:328px;width:74px;height:1px;background:#e2e2e2"></div>
<div class="a" style="left:774px;top:308px;width:74px;height:20px;background:#f9f9f9"></div>
<div class="a" style="left:848px;top:308px;width:1px;height:21px;background:#e2e2e2"></div>
<div class="a" style="left:774px;top:328px;width:74px;height:1px;background:#e2e2e2"></div>
<div class="a" style="left:849px;top:308px;width:74px;height:20px;background:#f9f9f9"></div>
<div class="a" style="left:923px;top:308px;width:1px;height:21px;background:#e2e2e2"></div>
<div class="a" style="left:849px;top:328px;width:74px;height:1px;background:#e2e2e2"></div>
<div class="a" style="left:924px;top:308px;width:74px;height:20px;background:#f9f9f9"></div>
<div class="a" style="left:998px;top:308px;width:1px;height:21px;background:#e2e2e2"></div>
<div class="a" style="left:924px;top:328px;width:74px;height:1px;background:#e2e2e2"></div>
<div class="cb" style="left:55px;top:312px"></div>
<div class="t" style="left:102.2px;top:313px;font-size:11px;color:#0000c8;transform:scaleX(0.9365);transform-origin:0 0;">D-Nord</div>
<div class="t" style="left:177.2px;top:313px;font-size:11px;color:#0000c8;transform:scaleX(1.0302);transform-origin:0 0;">offen</div>
<div class="t" style="left:252.2px;top:313px;font-size:11px;color:#0000c8;transform:scaleX(0.8694);transform-origin:0 0;">CS NÜRNBE...</div>
<div class="t" style="left:327.2px;top:313px;font-size:11px;color:#0000c8;transform:scaleX(0.8642);transform-origin:0 0;">LKW</div>
<div class="t" style="left:402.2px;top:313px;font-size:11px;color:#0000c8;">04.02.2021...</div>
<div class="t" style="left:477.2px;top:313px;font-size:11px;color:#0000c8;">10574.001-1</div>
<div class="a" style="left:10px;top:329px;width:13px;height:20px;background:#fff"></div>
<div class="a" style="left:11px;top:330px;width:12px;height:18px;background:linear-gradient(#f6f6f6,#e0e0e0)"></div>
<div class="a" style="left:10px;top:349px;width:13px;height:1px;background:#a0a0a0"></div>
<div class="a" style="left:23px;top:329px;width:1px;height:21px;background:#9c9c9c"></div>
<div class="a" style="left:24px;top:329px;width:74px;height:20px;background:#f9f9f9"></div>
<div class="a" style="left:98px;top:329px;width:1px;height:21px;background:#e2e2e2"></div>
<div class="a" style="left:24px;top:349px;width:74px;height:1px;background:#e2e2e2"></div>
<div class="a" style="left:99px;top:329px;width:74px;height:20px;background:#f9f9f9"></div>
<div class="a" style="left:173px;top:329px;width:1px;height:21px;background:#e2e2e2"></div>
<div class="a" style="left:99px;top:349px;width:74px;height:1px;background:#e2e2e2"></div>
<div class="a" style="left:174px;top:329px;width:74px;height:20px;background:#ff0000"></div>
<div class="a" style="left:248px;top:329px;width:1px;height:21px;background:#e2e2e2"></div>
<div class="a" style="left:174px;top:349px;width:74px;height:1px;background:#e2e2e2"></div>
<div class="a" style="left:249px;top:329px;width:74px;height:20px;background:#eff8e4"></div>
<div class="a" style="left:323px;top:329px;width:1px;height:21px;background:#e2e2e2"></div>
<div class="a" style="left:249px;top:349px;width:74px;height:1px;background:#e2e2e2"></div>
<div class="a" style="left:324px;top:329px;width:74px;height:20px;background:#eff8e4"></div>
<div class="a" style="left:398px;top:329px;width:1px;height:21px;background:#e2e2e2"></div>
<div class="a" style="left:324px;top:349px;width:74px;height:1px;background:#e2e2e2"></div>
<div class="a" style="left:399px;top:329px;width:74px;height:20px;background:#eff8e4"></div>
<div class="a" style="left:473px;top:329px;width:1px;height:21px;background:#e2e2e2"></div>
<div class="a" style="left:399px;top:349px;width:74px;height:1px;background:#e2e2e2"></div>
<div class="a" style="left:474px;top:329px;width:74px;height:20px;background:#eff8e4"></div>
<div class="a" style="left:548px;top:329px;width:1px;height:21px;background:#e2e2e2"></div>
<div class="a" style="left:474px;top:349px;width:74px;height:1px;background:#e2e2e2"></div>
<div class="a" style="left:549px;top:329px;width:74px;height:20px;background:#eff8e4"></div>
<div class="a" style="left:623px;top:329px;width:1px;height:21px;background:#e2e2e2"></div>
<div class="a" style="left:549px;top:349px;width:74px;height:1px;background:#e2e2e2"></div>
<div class="a" style="left:624px;top:329px;width:74px;height:20px;background:#f9f9f9"></div>
<div class="a" style="left:698px;top:329px;width:1px;height:21px;background:#e2e2e2"></div>
<div class="a" style="left:624px;top:349px;width:74px;height:1px;background:#e2e2e2"></div>
<div class="a" style="left:699px;top:329px;width:74px;height:20px;background:#f9f9f9"></div>
<div class="a" style="left:773px;top:329px;width:1px;height:21px;background:#e2e2e2"></div>
<div class="a" style="left:699px;top:349px;width:74px;height:1px;background:#e2e2e2"></div>
<div class="a" style="left:774px;top:329px;width:74px;height:20px;background:#f9f9f9"></div>
<div class="a" style="left:848px;top:329px;width:1px;height:21px;background:#e2e2e2"></div>
<div class="a" style="left:774px;top:349px;width:74px;height:1px;background:#e2e2e2"></div>
<div class="a" style="left:849px;top:329px;width:74px;height:20px;background:#f9f9f9"></div>
<div class="a" style="left:923px;top:329px;width:1px;height:21px;background:#e2e2e2"></div>
<div class="a" style="left:849px;top:349px;width:74px;height:1px;background:#e2e2e2"></div>
<div class="a" style="left:924px;top:329px;width:74px;height:20px;background:#f9f9f9"></div>
<div class="a" style="left:998px;top:329px;width:1px;height:21px;background:#e2e2e2"></div>
<div class="a" style="left:924px;top:349px;width:74px;height:1px;background:#e2e2e2"></div>
<div class="cb" style="left:55px;top:333px"></div>
<div class="t" style="left:102.2px;top:334px;font-size:11px;color:#000;transform:scaleX(0.9140);transform-origin:0 0;">D-Süd</div>
<div class="t" style="left:177.2px;top:334px;font-size:11px;color:#000;transform:scaleX(1.0302);transform-origin:0 0;">offen</div>
<div class="t" style="left:252.2px;top:334px;font-size:11px;color:#000;transform:scaleX(0.8694);transform-origin:0 0;">CS NÜRNBE...</div>
<div class="t" style="left:327.2px;top:334px;font-size:11px;color:#000;transform:scaleX(0.8642);transform-origin:0 0;">LKW</div>
<div class="t" style="left:402.2px;top:334px;font-size:11px;color:#000;">28.04.2021...</div>
<div class="t" style="left:477.2px;top:334px;font-size:11px;color:#000;">10654.001-1</div>
<div class="a" style="left:10px;top:350px;width:13px;height:20px;background:#fff"></div>
<div class="a" style="left:11px;top:351px;width:12px;height:18px;background:linear-gradient(#f6f6f6,#e0e0e0)"></div>
<div class="a" style="left:10px;top:370px;width:13px;height:1px;background:#a0a0a0"></div>
<div class="a" style="left:23px;top:350px;width:1px;height:21px;background:#9c9c9c"></div>
<div class="a" style="left:24px;top:350px;width:74px;height:20px;background:#f9f9f9"></div>
<div class="a" style="left:98px;top:350px;width:1px;height:21px;background:#e2e2e2"></div>
<div class="a" style="left:24px;top:370px;width:74px;height:1px;background:#e2e2e2"></div>
<div class="a" style="left:99px;top:350px;width:74px;height:20px;background:#f9f9f9"></div>
<div class="a" style="left:173px;top:350px;width:1px;height:21px;background:#e2e2e2"></div>
<div class="a" style="left:99px;top:370px;width:74px;height:1px;background:#e2e2e2"></div>
<div class="a" style="left:174px;top:350px;width:74px;height:20px;background:#ff0000"></div>
<div class="a" style="left:248px;top:350px;width:1px;height:21px;background:#e2e2e2"></div>
<div class="a" style="left:174px;top:370px;width:74px;height:1px;background:#e2e2e2"></div>
<div class="a" style="left:249px;top:350px;width:74px;height:20px;background:#e6f3fb"></div>
<div class="a" style="left:323px;top:350px;width:1px;height:21px;background:#e2e2e2"></div>
<div class="a" style="left:249px;top:370px;width:74px;height:1px;background:#e2e2e2"></div>
<div class="a" style="left:324px;top:350px;width:74px;height:20px;background:#e6f3fb"></div>
<div class="a" style="left:398px;top:350px;width:1px;height:21px;background:#e2e2e2"></div>
<div class="a" style="left:324px;top:370px;width:74px;height:1px;background:#e2e2e2"></div>
<div class="a" style="left:399px;top:350px;width:74px;height:20px;background:#e6f3fb"></div>
<div class="a" style="left:473px;top:350px;width:1px;height:21px;background:#e2e2e2"></div>
<div class="a" style="left:399px;top:370px;width:74px;height:1px;background:#e2e2e2"></div>
<div class="a" style="left:474px;top:350px;width:74px;height:20px;background:#e6f3fb"></div>
<div class="a" style="left:548px;top:350px;width:1px;height:21px;background:#e2e2e2"></div>
<div class="a" style="left:474px;top:370px;width:74px;height:1px;background:#e2e2e2"></div>
<div class="a" style="left:549px;top:350px;width:74px;height:20px;background:#e6f3fb"></div>
<div class="a" style="left:623px;top:350px;width:1px;height:21px;background:#e2e2e2"></div>
<div class="a" style="left:549px;top:370px;width:74px;height:1px;background:#e2e2e2"></div>
<div class="a" style="left:624px;top:350px;width:74px;height:20px;background:#f9f9f9"></div>
<div class="a" style="left:698px;top:350px;width:1px;height:21px;background:#e2e2e2"></div>
<div class="a" style="left:624px;top:370px;width:74px;height:1px;background:#e2e2e2"></div>
<div class="a" style="left:699px;top:350px;width:74px;height:20px;background:#f9f9f9"></div>
<div class="a" style="left:773px;top:350px;width:1px;height:21px;background:#e2e2e2"></div>
<div class="a" style="left:699px;top:370px;width:74px;height:1px;background:#e2e2e2"></div>
<div class="a" style="left:774px;top:350px;width:74px;height:20px;background:#f9f9f9"></div>
<div class="a" style="left:848px;top:350px;width:1px;height:21px;background:#e2e2e2"></div>
<div class="a" style="left:774px;top:370px;width:74px;height:1px;background:#e2e2e2"></div>
<div class="a" style="left:849px;top:350px;width:74px;height:20px;background:#f9f9f9"></div>
<div class="a" style="left:923px;top:350px;width:1px;height:21px;background:#e2e2e2"></div>
<div class="a" style="left:849px;top:370px;width:74px;height:1px;background:#e2e2e2"></div>
<div class="a" style="left:924px;top:350px;width:74px;height:20px;background:#f9f9f9"></div>
<div class="a" style="left:998px;top:350px;width:1px;height:21px;background:#e2e2e2"></div>
<div class="a" style="left:924px;top:370px;width:74px;height:1px;background:#e2e2e2"></div>
<div class="cb" style="left:55px;top:354px"></div>
<div class="t" style="left:102.2px;top:355px;font-size:11px;color:#000;transform:scaleX(0.9365);transform-origin:0 0;">D-Nord</div>
<div class="t" style="left:177.2px;top:355px;font-size:11px;color:#000;transform:scaleX(1.0302);transform-origin:0 0;">offen</div>
<div class="t" style="left:252.2px;top:355px;font-size:11px;color:#000;transform:scaleX(0.8694);transform-origin:0 0;">CS NÜRNBE...</div>
<div class="t" style="left:327.2px;top:355px;font-size:11px;color:#000;transform:scaleX(0.8642);transform-origin:0 0;">LKW</div>
<div class="t" style="left:402.2px;top:355px;font-size:11px;color:#000;">25.02.2021...</div>
<div class="t" style="left:477.2px;top:355px;font-size:11px;color:#000;">10654.002-1</div>
<div class="a" style="left:10px;top:371px;width:13px;height:20px;background:#fff"></div>
<div class="a" style="left:11px;top:372px;width:12px;height:18px;background:linear-gradient(#f6f6f6,#e0e0e0)"></div>
<div class="a" style="left:10px;top:391px;width:13px;height:1px;background:#a0a0a0"></div>
<div class="a" style="left:23px;top:371px;width:1px;height:21px;background:#9c9c9c"></div>
<div class="a" style="left:24px;top:371px;width:74px;height:20px;background:#f9f9f9"></div>
<div class="a" style="left:98px;top:371px;width:1px;height:21px;background:#e2e2e2"></div>
<div class="a" style="left:24px;top:391px;width:74px;height:1px;background:#e2e2e2"></div>
<div class="a" style="left:99px;top:371px;width:74px;height:20px;background:#f9f9f9"></div>
<div class="a" style="left:173px;top:371px;width:1px;height:21px;background:#e2e2e2"></div>
<div class="a" style="left:99px;top:391px;width:74px;height:1px;background:#e2e2e2"></div>
<div class="a" style="left:174px;top:371px;width:74px;height:20px;background:#ff0000"></div>
<div class="a" style="left:248px;top:371px;width:1px;height:21px;background:#e2e2e2"></div>
<div class="a" style="left:174px;top:391px;width:74px;height:1px;background:#e2e2e2"></div>
<div class="a" style="left:249px;top:371px;width:74px;height:20px;background:#eff8e4"></div>
<div class="a" style="left:323px;top:371px;width:1px;height:21px;background:#e2e2e2"></div>
<div class="a" style="left:249px;top:391px;width:74px;height:1px;background:#e2e2e2"></div>
<div class="a" style="left:324px;top:371px;width:74px;height:20px;background:#eff8e4"></div>
<div class="a" style="left:398px;top:371px;width:1px;height:21px;background:#e2e2e2"></div>
<div class="a" style="left:324px;top:391px;width:74px;height:1px;background:#e2e2e2"></div>
<div class="a" style="left:399px;top:371px;width:74px;height:20px;background:#eff8e4"></div>
<div class="a" style="left:473px;top:371px;width:1px;height:21px;background:#e2e2e2"></div>
<div class="a" style="left:399px;top:391px;width:74px;height:1px;background:#e2e2e2"></div>
<div class="a" style="left:474px;top:371px;width:74px;height:20px;background:#eff8e4"></div>
<div class="a" style="left:548px;top:371px;width:1px;height:21px;background:#e2e2e2"></div>
<div class="a" style="left:474px;top:391px;width:74px;height:1px;background:#e2e2e2"></div>
<div class="a" style="left:549px;top:371px;width:74px;height:20px;background:#eff8e4"></div>
<div class="a" style="left:623px;top:371px;width:1px;height:21px;background:#e2e2e2"></div>
<div class="a" style="left:549px;top:391px;width:74px;height:1px;background:#e2e2e2"></div>
<div class="a" style="left:624px;top:371px;width:74px;height:20px;background:#f9f9f9"></div>
<div class="a" style="left:698px;top:371px;width:1px;height:21px;background:#e2e2e2"></div>
<div class="a" style="left:624px;top:391px;width:74px;height:1px;background:#e2e2e2"></div>
<div class="a" style="left:699px;top:371px;width:74px;height:20px;background:#f9f9f9"></div>
<div class="a" style="left:773px;top:371px;width:1px;height:21px;background:#e2e2e2"></div>
<div class="a" style="left:699px;top:391px;width:74px;height:1px;background:#e2e2e2"></div>
<div class="a" style="left:774px;top:371px;width:74px;height:20px;background:#f9f9f9"></div>
<div class="a" style="left:848px;top:371px;width:1px;height:21px;background:#e2e2e2"></div>
<div class="a" style="left:774px;top:391px;width:74px;height:1px;background:#e2e2e2"></div>
<div class="a" style="left:849px;top:371px;width:74px;height:20px;background:#f9f9f9"></div>
<div class="a" style="left:923px;top:371px;width:1px;height:21px;background:#e2e2e2"></div>
<div class="a" style="left:849px;top:391px;width:74px;height:1px;background:#e2e2e2"></div>
<div class="a" style="left:924px;top:371px;width:74px;height:20px;background:#f9f9f9"></div>
<div class="a" style="left:998px;top:371px;width:1px;height:21px;background:#e2e2e2"></div>
<div class="a" style="left:924px;top:391px;width:74px;height:1px;background:#e2e2e2"></div>
<div class="cb" style="left:55px;top:375px"></div>
<div class="t" style="left:177.2px;top:376px;font-size:11px;color:#000;transform:scaleX(1.0302);transform-origin:0 0;">offen</div>
<div class="t" style="left:252.2px;top:376px;font-size:11px;color:#000;transform:scaleX(0.8694);transform-origin:0 0;">CS NÜRNBE...</div>
<div class="t" style="left:327.2px;top:376px;font-size:11px;color:#000;transform:scaleX(0.8642);transform-origin:0 0;">LKW</div>
<div class="t" style="left:402.2px;top:376px;font-size:11px;color:#000;">19.05.2021...</div>
<div class="t" style="left:477.2px;top:376px;font-size:11px;color:#000;">10654.003-1</div>
<div class="a" style="left:10px;top:392px;width:13px;height:20px;background:#fff"></div>
<div class="a" style="left:11px;top:393px;width:12px;height:18px;background:linear-gradient(#f6f6f6,#e0e0e0)"></div>
<div class="a" style="left:10px;top:412px;width:13px;height:1px;background:#a0a0a0"></div>
<div class="a" style="left:23px;top:392px;width:1px;height:21px;background:#9c9c9c"></div>
<div class="a" style="left:24px;top:392px;width:74px;height:20px;background:#f9f9f9"></div>
<div class="a" style="left:98px;top:392px;width:1px;height:21px;background:#e2e2e2"></div>
<div class="a" style="left:24px;top:412px;width:74px;height:1px;background:#e2e2e2"></div>
<div class="a" style="left:99px;top:392px;width:74px;height:20px;background:#f9f9f9"></div>
<div class="a" style="left:173px;top:392px;width:1px;height:21px;background:#e2e2e2"></div>
<div class="a" style="left:99px;top:412px;width:74px;height:1px;background:#e2e2e2"></div>
<div class="a" style="left:174px;top:392px;width:74px;height:20px;background:#ff0000"></div>
<div class="a" style="left:248px;top:392px;width:1px;height:21px;background:#e2e2e2"></div>
<div class="a" style="left:174px;top:412px;width:74px;height:1px;background:#e2e2e2"></div>
<div class="a" style="left:249px;top:392px;width:74px;height:20px;background:#e6f3fb"></div>
<div class="a" style="left:323px;top:392px;width:1px;height:21px;background:#e2e2e2"></div>
<div class="a" style="left:249px;top:412px;width:74px;height:1px;background:#e2e2e2"></div>
<div class="a" style="left:324px;top:392px;width:74px;height:20px;background:#e6f3fb"></div>
<div class="a" style="left:398px;top:392px;width:1px;height:21px;background:#e2e2e2"></div>
<div class="a" style="left:324px;top:412px;width:74px;height:1px;background:#e2e2e2"></div>
<div class="a" style="left:399px;top:392px;width:74px;height:20px;background:#e6f3fb"></div>
<div class="a" style="left:473px;top:392px;width:1px;height:21px;background:#e2e2e2"></div>
<div class="a" style="left:399px;top:412px;width:74px;height:1px;background:#e2e2e2"></div>
<div class="a" style="left:474px;top:392px;width:74px;height:20px;background:#e6f3fb"></div>
<div class="a" style="left:548px;top:392px;width:1px;height:21px;background:#e2e2e2"></div>
<div class="a" style="left:474px;top:412px;width:74px;height:1px;background:#e2e2e2"></div>
<div class="a" style="left:549px;top:392px;width:74px;height:20px;background:#e6f3fb"></div>
<div class="a" style="left:623px;top:392px;width:1px;height:21px;background:#e2e2e2"></div>
<div class="a" style="left:549px;top:412px;width:74px;height:1px;background:#e2e2e2"></div>
<div class="a" style="left:624px;top:392px;width:74px;height:20px;background:#f9f9f9"></div>
<div class="a" style="left:698px;top:392px;width:1px;height:21px;background:#e2e2e2"></div>
<div class="a" style="left:624px;top:412px;width:74px;height:1px;background:#e2e2e2"></div>
<div class="a" style="left:699px;top:392px;width:74px;height:20px;background:#f9f9f9"></div>
<div class="a" style="left:773px;top:392px;width:1px;height:21px;background:#e2e2e2"></div>
<div class="a" style="left:699px;top:412px;width:74px;height:1px;background:#e2e2e2"></div>
<div class="a" style="left:774px;top:392px;width:74px;height:20px;background:#f9f9f9"></div>
<div class="a" style="left:848px;top:392px;width:1px;height:21px;background:#e2e2e2"></div>
<div class="a" style="left:774px;top:412px;width:74px;height:1px;background:#e2e2e2"></div>
<div class="a" style="left:849px;top:392px;width:74px;height:20px;background:#f9f9f9"></div>
<div class="a" style="left:923px;top:392px;width:1px;height:21px;background:#e2e2e2"></div>
<div class="a" style="left:849px;top:412px;width:74px;height:1px;background:#e2e2e2"></div>
<div class="a" style="left:924px;top:392px;width:74px;height:20px;background:#f9f9f9"></div>
<div class="a" style="left:998px;top:392px;width:1px;height:21px;background:#e2e2e2"></div>
<div class="a" style="left:924px;top:412px;width:74px;height:1px;background:#e2e2e2"></div>
<div class="cb" style="left:55px;top:396px"></div>
<div class="t" style="left:102.2px;top:397px;font-size:11px;color:#0000c8;transform:scaleX(0.9365);transform-origin:0 0;">D-Nord</div>
<div class="t" style="left:177.2px;top:397px;font-size:11px;color:#0000c8;transform:scaleX(1.0302);transform-origin:0 0;">offen</div>
<div class="t" style="left:252.2px;top:397px;font-size:11px;color:#0000c8;transform:scaleX(0.8694);transform-origin:0 0;">CS NÜRNBE...</div>
<div class="t" style="left:327.2px;top:397px;font-size:11px;color:#0000c8;transform:scaleX(0.8642);transform-origin:0 0;">LKW</div>
<div class="t" style="left:402.2px;top:397px;font-size:11px;color:#0000c8;transform:scaleX(1.0172);transform-origin:0 0;">11.02.2021...</div>
<div class="t" style="left:477.2px;top:397px;font-size:11px;color:#0000c8;">10574.002-1</div>
<div class="a" style="left:10px;top:413px;width:13px;height:20px;background:#fff"></div>
<div class="a" style="left:11px;top:414px;width:12px;height:18px;background:linear-gradient(#f6f6f6,#e0e0e0)"></div>
<div class="a" style="left:10px;top:433px;width:13px;height:1px;background:#a0a0a0"></div>
<div class="a" style="left:23px;top:413px;width:1px;height:21px;background:#9c9c9c"></div>
<div class="a" style="left:24px;top:413px;width:74px;height:20px;background:#f9f9f9"></div>
<div class="a" style="left:98px;top:413px;width:1px;height:21px;background:#e2e2e2"></div>
<div class="a" style="left:24px;top:433px;width:74px;height:1px;background:#e2e2e2"></div>
<div class="a" style="left:99px;top:413px;width:74px;height:20px;background:#f9f9f9"></div>
<div class="a" style="left:173px;top:413px;width:1px;height:21px;background:#e2e2e2"></div>
<div class="a" style="left:99px;top:433px;width:74px;height:1px;background:#e2e2e2"></div>
<div class="a" style="left:174px;top:413px;width:74px;height:20px;background:#ff0000"></div>
<div class="a" style="left:248px;top:413px;width:1px;height:21px;background:#e2e2e2"></div>
<div class="a" style="left:174px;top:433px;width:74px;height:1px;background:#e2e2e2"></div>
<div class="a" style="left:249px;top:413px;width:74px;height:20px;background:#eff8e4"></div>
<div class="a" style="left:323px;top:413px;width:1px;height:21px;background:#e2e2e2"></div>
<div class="a" style="left:249px;top:433px;width:74px;height:1px;background:#e2e2e2"></div>
<div class="a" style="left:324px;top:413px;width:74px;height:20px;background:#eff8e4"></div>
<div class="a" style="left:398px;top:413px;width:1px;height:21px;background:#e2e2e2"></div>
<div class="a" style="left:324px;top:433px;width:74px;height:1px;background:#e2e2e2"></div>
<div class="a" style="left:399px;top:413px;width:74px;height:20px;background:#eff8e4"></div>
<div class="a" style="left:473px;top:413px;width:1px;height:21px;background:#e2e2e2"></div>
<div class="a" style="left:399px;top:433px;width:74px;height:1px;background:#e2e2e2"></div>
<div class="a" style="left:474px;top:413px;width:74px;height:20px;background:#eff8e4"></div>
<div class="a" style="left:548px;top:413px;width:1px;height:21px;background:#e2e2e2"></div>
<div class="a" style="left:474px;top:433px;width:74px;height:1px;background:#e2e2e2"></div>
<div class="a" style="left:549px;top:413px;width:74px;height:20px;background:#eff8e4"></div>
<div class="a" style="left:623px;top:413px;width:1px;height:21px;background:#e2e2e2"></div>
<div class="a" style="left:549px;top:433px;width:74px;height:1px;background:#e2e2e2"></div>
<div class="a" style="left:624px;top:413px;width:74px;height:20px;background:#f9f9f9"></div>
<div class="a" style="left:698px;top:413px;width:1px;height:21px;background:#e2e2e2"></div>
<div class="a" style="left:624px;top:433px;width:74px;height:1px;background:#e2e2e2"></div>
<div class="a" style="left:699px;top:413px;width:74px;height:20px;background:#f9f9f9"></div>
<div class="a" style="left:773px;top:413px;width:1px;height:21px;background:#e2e2e2"></div>
<div class="a" style="left:699px;top:433px;width:74px;height:1px;background:#e2e2e2"></div>
<div class="a" style="left:774px;top:413px;width:74px;height:20px;background:#f9f9f9"></div>
<div class="a" style="left:848px;top:413px;width:1px;height:21px;background:#e2e2e2"></div>
<div class="a" style="left:774px;top:433px;width:74px;height:1px;background:#e2e2e2"></div>
<div class="a" style="left:849px;top:413px;width:74px;height:20px;background:#f9f9f9"></div>
<div class="a" style="left:923px;top:413px;width:1px;height:21px;background:#e2e2e2"></div>
<div class="a" style="left:849px;top:433px;width:74px;height:1px;background:#e2e2e2"></div>
<div class="a" style="left:924px;top:413px;width:74px;height:20px;background:#f9f9f9"></div>
<div class="a" style="left:998px;top:413px;width:1px;height:21px;background:#e2e2e2"></div>
<div class="a" style="left:924px;top:433px;width:74px;height:1px;background:#e2e2e2"></div>
<div class="cb" style="left:55px;top:417px"></div>
<div class="t" style="left:102.2px;top:418px;font-size:11px;color:#000;transform:scaleX(0.9365);transform-origin:0 0;">D-Nord</div>
<div class="t" style="left:177.2px;top:418px;font-size:11px;color:#000;transform:scaleX(1.0302);transform-origin:0 0;">offen</div>
<div class="t" style="left:252.2px;top:418px;font-size:11px;color:#000;transform:scaleX(0.8694);transform-origin:0 0;">CS NÜRNBE...</div>
<div class="t" style="left:327.2px;top:418px;font-size:11px;color:#000;transform:scaleX(0.8642);transform-origin:0 0;">LKW</div>
<div class="t" style="left:402.2px;top:418px;font-size:11px;color:#000;">01.02.2021...</div>
<div class="t" style="left:477.2px;top:418px;font-size:11px;color:#000;">10574.003-1</div>
<div class="a" style="left:10px;top:434px;width:13px;height:20px;background:#fff"></div>
<div class="a" style="left:11px;top:435px;width:12px;height:18px;background:linear-gradient(#f6f6f6,#e0e0e0)"></div>
<div class="a" style="left:10px;top:454px;width:13px;height:1px;background:#a0a0a0"></div>
<div class="a" style="left:23px;top:434px;width:1px;height:21px;background:#9c9c9c"></div>
<div class="a" style="left:24px;top:434px;width:74px;height:20px;background:#f9f9f9"></div>
<div class="a" style="left:98px;top:434px;width:1px;height:21px;background:#e2e2e2"></div>
<div class="a" style="left:24px;top:454px;width:74px;height:1px;background:#e2e2e2"></div>
<div class="a" style="left:99px;top:434px;width:74px;height:20px;background:#f9f9f9"></div>
<div class="a" style="left:173px;top:434px;width:1px;height:21px;background:#e2e2e2"></div>
<div class="a" style="left:99px;top:454px;width:74px;height:1px;background:#e2e2e2"></div>
<div class="a" style="left:174px;top:434px;width:74px;height:20px;background:#ff0000"></div>
<div class="a" style="left:248px;top:434px;width:1px;height:21px;background:#e2e2e2"></div>
<div class="a" style="left:174px;top:454px;width:74px;height:1px;background:#e2e2e2"></div>
<div class="a" style="left:249px;top:434px;width:74px;height:20px;background:#e6f3fb"></div>
<div class="a" style="left:323px;top:434px;width:1px;height:21px;background:#e2e2e2"></div>
<div class="a" style="left:249px;top:454px;width:74px;height:1px;background:#e2e2e2"></div>
<div class="a" style="left:324px;top:434px;width:74px;height:20px;background:#e6f3fb"></div>
<div class="a" style="left:398px;top:434px;width:1px;height:21px;background:#e2e2e2"></div>
<div class="a" style="left:324px;top:454px;width:74px;height:1px;background:#e2e2e2"></div>
<div class="a" style="left:399px;top:434px;width:74px;height:20px;background:#e6f3fb"></div>
<div class="a" style="left:473px;top:434px;width:1px;height:21px;background:#e2e2e2"></div>
<div class="a" style="left:399px;top:454px;width:74px;height:1px;background:#e2e2e2"></div>
<div class="a" style="left:474px;top:434px;width:74px;height:20px;background:#e6f3fb"></div>
<div class="a" style="left:548px;top:434px;width:1px;height:21px;background:#e2e2e2"></div>
<div class="a" style="left:474px;top:454px;width:74px;height:1px;background:#e2e2e2"></div>
<div class="a" style="left:549px;top:434px;width:74px;height:20px;background:#e6f3fb"></div>
<div class="a" style="left:623px;top:434px;width:1px;height:21px;background:#e2e2e2"></div>
<div class="a" style="left:549px;top:454px;width:74px;height:1px;background:#e2e2e2"></div>
<div class="a" style="left:624px;top:434px;width:74px;height:20px;background:#f9f9f9"></div>
<div class="a" style="left:698px;top:434px;width:1px;height:21px;background:#e2e2e2"></div>
<div class="a" style="left:624px;top:454px;width:74px;height:1px;background:#e2e2e2"></div>
<div class="a" style="left:699px;top:434px;width:74px;height:20px;background:#f9f9f9"></div>
<div class="a" style="left:773px;top:434px;width:1px;height:21px;background:#e2e2e2"></div>
<div class="a" style="left:699px;top:454px;width:74px;height:1px;background:#e2e2e2"></div>
<div class="a" style="left:774px;top:434px;width:74px;height:20px;background:#f9f9f9"></div>
<div class="a" style="left:848px;top:434px;width:1px;height:21px;background:#e2e2e2"></div>
<div class="a" style="left:774px;top:454px;width:74px;height:1px;background:#e2e2e2"></div>
<div class="a" style="left:849px;top:434px;width:74px;height:20px;background:#f9f9f9"></div>
<div class="a" style="left:923px;top:434px;width:1px;height:21px;background:#e2e2e2"></div>
<div class="a" style="left:849px;top:454px;width:74px;height:1px;background:#e2e2e2"></div>
<div class="a" style="left:924px;top:434px;width:74px;height:20px;background:#f9f9f9"></div>
<div class="a" style="left:998px;top:434px;width:1px;height:21px;background:#e2e2e2"></div>
<div class="a" style="left:924px;top:454px;width:74px;height:1px;background:#e2e2e2"></div>
<div class="cb" style="left:55px;top:438px"></div>
<div class="t" style="left:102.2px;top:439px;font-size:11px;color:#000;">D-West</div>
<div class="t" style="left:177.2px;top:439px;font-size:11px;color:#000;transform:scaleX(1.0302);transform-origin:0 0;">offen</div>
<div class="t" style="left:252.2px;top:439px;font-size:11px;color:#000;transform:scaleX(0.8420);transform-origin:0 0;">LADUNG</div>
<div class="t" style="left:327.2px;top:439px;font-size:11px;color:#000;transform:scaleX(0.8642);transform-origin:0 0;">LKW</div>
<div class="t" style="left:402.2px;top:439px;font-size:11px;color:#000;">25.02.2021...</div>
<div class="t" style="left:477.2px;top:439px;font-size:11px;color:#000;">L20210227</div>
<div class="a" style="left:10px;top:455px;width:13px;height:20px;background:#fff"></div>
<div class="a" style="left:11px;top:456px;width:12px;height:18px;background:linear-gradient(#f6f6f6,#e0e0e0)"></div>
<div class="a" style="left:10px;top:475px;width:13px;height:1px;background:#a0a0a0"></div>
<div class="a" style="left:23px;top:455px;width:1px;height:21px;background:#9c9c9c"></div>
<div class="a" style="left:24px;top:455px;width:74px;height:20px;background:#f9f9f9"></div>
<div class="a" style="left:98px;top:455px;width:1px;height:21px;background:#e2e2e2"></div>
<div class="a" style="left:24px;top:475px;width:74px;height:1px;background:#e2e2e2"></div>
<div class="a" style="left:99px;top:455px;width:74px;height:20px;background:#f9f9f9"></div>
<div class="a" style="left:173px;top:455px;width:1px;height:21px;background:#e2e2e2"></div>
<div class="a" style="left:99px;top:475px;width:74px;height:1px;background:#e2e2e2"></div>
<div class="a" style="left:174px;top:455px;width:74px;height:20px;background:#ff0000"></div>
<div class="a" style="left:248px;top:455px;width:1px;height:21px;background:#e2e2e2"></div>
<div class="a" style="left:174px;top:475px;width:74px;height:1px;background:#e2e2e2"></div>
<div class="a" style="left:249px;top:455px;width:74px;height:20px;background:#eff8e4"></div>
<div class="a" style="left:323px;top:455px;width:1px;height:21px;background:#e2e2e2"></div>
<div class="a" style="left:249px;top:475px;width:74px;height:1px;background:#e2e2e2"></div>
<div class="a" style="left:324px;top:455px;width:74px;height:20px;background:#eff8e4"></div>
<div class="a" style="left:398px;top:455px;width:1px;height:21px;background:#e2e2e2"></div>
<div class="a" style="left:324px;top:475px;width:74px;height:1px;background:#e2e2e2"></div>
<div class="a" style="left:399px;top:455px;width:74px;height:20px;background:#eff8e4"></div>
<div class="a" style="left:473px;top:455px;width:1px;height:21px;background:#e2e2e2"></div>
<div class="a" style="left:399px;top:475px;width:74px;height:1px;background:#e2e2e2"></div>
<div class="a" style="left:474px;top:455px;width:74px;height:20px;background:#eff8e4"></div>
<div class="a" style="left:548px;top:455px;width:1px;height:21px;background:#e2e2e2"></div>
<div class="a" style="left:474px;top:475px;width:74px;height:1px;background:#e2e2e2"></div>
<div class="a" style="left:549px;top:455px;width:74px;height:20px;background:#eff8e4"></div>
<div class="a" style="left:623px;top:455px;width:1px;height:21px;background:#e2e2e2"></div>
<div class="a" style="left:549px;top:475px;width:74px;height:1px;background:#e2e2e2"></div>
<div class="a" style="left:624px;top:455px;width:74px;height:20px;background:#f9f9f9"></div>
<div class="a" style="left:698px;top:455px;width:1px;height:21px;background:#e2e2e2"></div>
<div class="a" style="left:624px;top:475px;width:74px;height:1px;background:#e2e2e2"></div>
<div class="a" style="left:699px;top:455px;width:74px;height:20px;background:#f9f9f9"></div>
<div class="a" style="left:773px;top:455px;width:1px;height:21px;background:#e2e2e2"></div>
<div class="a" style="left:699px;top:475px;width:74px;height:1px;background:#e2e2e2"></div>
<div class="a" style="left:774px;top:455px;width:74px;height:20px;background:#f9f9f9"></div>
<div class="a" style="left:848px;top:455px;width:1px;height:21px;background:#e2e2e2"></div>
<div class="a" style="left:774px;top:475px;width:74px;height:1px;background:#e2e2e2"></div>
<div class="a" style="left:849px;top:455px;width:74px;height:20px;background:#f9f9f9"></div>
<div class="a" style="left:923px;top:455px;width:1px;height:21px;background:#e2e2e2"></div>
<div class="a" style="left:849px;top:475px;width:74px;height:1px;background:#e2e2e2"></div>
<div class="a" style="left:924px;top:455px;width:74px;height:20px;background:#f9f9f9"></div>
<div class="a" style="left:998px;top:455px;width:1px;height:21px;background:#e2e2e2"></div>
<div class="a" style="left:924px;top:475px;width:74px;height:1px;background:#e2e2e2"></div>
<div class="cb" style="left:55px;top:459px"></div>
<div class="t" style="left:102.2px;top:460px;font-size:11px;color:#000;">D-West</div>
<div class="t" style="left:177.2px;top:460px;font-size:11px;color:#000;transform:scaleX(1.0302);transform-origin:0 0;">offen</div>
<div class="t" style="left:252.2px;top:460px;font-size:11px;color:#000;transform:scaleX(0.8583);transform-origin:0 0;">CS HAMBURG</div>
<div class="t" style="left:327.2px;top:460px;font-size:11px;color:#000;transform:scaleX(0.8642);transform-origin:0 0;">LKW</div>
<div class="t" style="left:402.2px;top:460px;font-size:11px;color:#000;">02.03.2021...</div>
<div class="t" style="left:477.2px;top:460px;font-size:11px;color:#000;">25-0001</div>
<div class="a" style="left:10px;top:476px;width:13px;height:20px;background:#fff"></div>
<div class="a" style="left:11px;top:477px;width:12px;height:18px;background:linear-gradient(#f6f6f6,#e0e0e0)"></div>
<div class="a" style="left:10px;top:496px;width:13px;height:1px;background:#a0a0a0"></div>
<div class="a" style="left:23px;top:476px;width:1px;height:21px;background:#9c9c9c"></div>
<div class="a" style="left:24px;top:476px;width:74px;height:20px;background:#f9f9f9"></div>
<div class="a" style="left:98px;top:476px;width:1px;height:21px;background:#e2e2e2"></div>
<div class="a" style="left:24px;top:496px;width:74px;height:1px;background:#e2e2e2"></div>
<div class="a" style="left:99px;top:476px;width:74px;height:20px;background:#f9f9f9"></div>
<div class="a" style="left:173px;top:476px;width:1px;height:21px;background:#e2e2e2"></div>
<div class="a" style="left:99px;top:496px;width:74px;height:1px;background:#e2e2e2"></div>
<div class="a" style="left:174px;top:476px;width:74px;height:20px;background:#ff0000"></div>
<div class="a" style="left:248px;top:476px;width:1px;height:21px;background:#e2e2e2"></div>
<div class="a" style="left:174px;top:496px;width:74px;height:1px;background:#e2e2e2"></div>
<div class="a" style="left:249px;top:476px;width:74px;height:20px;background:#e6f3fb"></div>
<div class="a" style="left:323px;top:476px;width:1px;height:21px;background:#e2e2e2"></div>
<div class="a" style="left:249px;top:496px;width:74px;height:1px;background:#e2e2e2"></div>
<div class="a" style="left:324px;top:476px;width:74px;height:20px;background:#e6f3fb"></div>
<div class="a" style="left:398px;top:476px;width:1px;height:21px;background:#e2e2e2"></div>
<div class="a" style="left:324px;top:496px;width:74px;height:1px;background:#e2e2e2"></div>
<div class="a" style="left:399px;top:476px;width:74px;height:20px;background:#e6f3fb"></div>
<div class="a" style="left:473px;top:476px;width:1px;height:21px;background:#e2e2e2"></div>
<div class="a" style="left:399px;top:496px;width:74px;height:1px;background:#e2e2e2"></div>
<div class="a" style="left:474px;top:476px;width:74px;height:20px;background:#e6f3fb"></div>
<div class="a" style="left:548px;top:476px;width:1px;height:21px;background:#e2e2e2"></div>
<div class="a" style="left:474px;top:496px;width:74px;height:1px;background:#e2e2e2"></div>
<div class="a" style="left:549px;top:476px;width:74px;height:20px;background:#e6f3fb"></div>
<div class="a" style="left:623px;top:476px;width:1px;height:21px;background:#e2e2e2"></div>
<div class="a" style="left:549px;top:496px;width:74px;height:1px;background:#e2e2e2"></div>
<div class="a" style="left:624px;top:476px;width:74px;height:20px;background:#f9f9f9"></div>
<div class="a" style="left:698px;top:476px;width:1px;height:21px;background:#e2e2e2"></div>
<div class="a" style="left:624px;top:496px;width:74px;height:1px;background:#e2e2e2"></div>
<div class="a" style="left:699px;top:476px;width:74px;height:20px;background:#f9f9f9"></div>
<div class="a" style="left:773px;top:476px;width:1px;height:21px;background:#e2e2e2"></div>
<div class="a" style="left:699px;top:496px;width:74px;height:1px;background:#e2e2e2"></div>
<div class="a" style="left:774px;top:476px;width:74px;height:20px;background:#f9f9f9"></div>
<div class="a" style="left:848px;top:476px;width:1px;height:21px;background:#e2e2e2"></div>
<div class="a" style="left:774px;top:496px;width:74px;height:1px;background:#e2e2e2"></div>
<div class="a" style="left:849px;top:476px;width:74px;height:20px;background:#f9f9f9"></div>
<div class="a" style="left:923px;top:476px;width:1px;height:21px;background:#e2e2e2"></div>
<div class="a" style="left:849px;top:496px;width:74px;height:1px;background:#e2e2e2"></div>
<div class="a" style="left:924px;top:476px;width:74px;height:20px;background:#f9f9f9"></div>
<div class="a" style="left:998px;top:476px;width:1px;height:21px;background:#e2e2e2"></div>
<div class="a" style="left:924px;top:496px;width:74px;height:1px;background:#e2e2e2"></div>
<div class="cb" style="left:55px;top:480px"></div>
<div class="t" style="left:102.2px;top:481px;font-size:11px;color:#000;transform:scaleX(0.9365);transform-origin:0 0;">D-Nord</div>
<div class="t" style="left:177.2px;top:481px;font-size:11px;color:#000;transform:scaleX(1.0302);transform-origin:0 0;">offen</div>
<div class="t" style="left:252.2px;top:481px;font-size:11px;color:#000;transform:scaleX(0.8694);transform-origin:0 0;">CS NÜRNBE...</div>
<div class="t" style="left:327.2px;top:481px;font-size:11px;color:#000;transform:scaleX(0.8642);transform-origin:0 0;">LKW</div>
<div class="t" style="left:402.2px;top:481px;font-size:11px;color:#000;">28.01.2021...</div>
<div class="t" style="left:477.2px;top:481px;font-size:11px;color:#000;">10455.001-1</div>
<div class="a" style="left:10px;top:497px;width:13px;height:20px;background:#fff"></div>
<div class="a" style="left:11px;top:498px;width:12px;height:18px;background:linear-gradient(#f6f6f6,#e0e0e0)"></div>
<div class="a" style="left:10px;top:517px;width:13px;height:1px;background:#a0a0a0"></div>
<div class="a" style="left:23px;top:497px;width:1px;height:21px;background:#9c9c9c"></div>
<div class="a" style="left:24px;top:497px;width:74px;height:20px;background:#f9f9f9"></div>
<div class="a" style="left:98px;top:497px;width:1px;height:21px;background:#e2e2e2"></div>
<div class="a" style="left:24px;top:517px;width:74px;height:1px;background:#e2e2e2"></div>
<div class="a" style="left:99px;top:497px;width:74px;height:20px;background:#f9f9f9"></div>
<div class="a" style="left:173px;top:497px;width:1px;height:21px;background:#e2e2e2"></div>
<div class="a" style="left:99px;top:517px;width:74px;height:1px;background:#e2e2e2"></div>
<div class="a" style="left:174px;top:497px;width:74px;height:20px;background:#ff0000"></div>
<div class="a" style="left:248px;top:497px;width:1px;height:21px;background:#e2e2e2"></div>
<div class="a" style="left:174px;top:517px;width:74px;height:1px;background:#e2e2e2"></div>
<div class="a" style="left:249px;top:497px;width:74px;height:20px;background:#eff8e4"></div>
<div class="a" style="left:323px;top:497px;width:1px;height:21px;background:#e2e2e2"></div>
<div class="a" style="left:249px;top:517px;width:74px;height:1px;background:#e2e2e2"></div>
<div class="a" style="left:324px;top:497px;width:74px;height:20px;background:#eff8e4"></div>
<div class="a" style="left:398px;top:497px;width:1px;height:21px;background:#e2e2e2"></div>
<div class="a" style="left:324px;top:517px;width:74px;height:1px;background:#e2e2e2"></div>
<div class="a" style="left:399px;top:497px;width:74px;height:20px;background:#eff8e4"></div>
<div class="a" style="left:473px;top:497px;width:1px;height:21px;background:#e2e2e2"></div>
<div class="a" style="left:399px;top:517px;width:74px;height:1px;background:#e2e2e2"></div>
<div class="a" style="left:474px;top:497px;width:74px;height:20px;background:#eff8e4"></div>
<div class="a" style="left:548px;top:497px;width:1px;height:21px;background:#e2e2e2"></div>
<div class="a" style="left:474px;top:517px;width:74px;height:1px;background:#e2e2e2"></div>
<div class="a" style="left:549px;top:497px;width:74px;height:20px;background:#eff8e4"></div>
<div class="a" style="left:623px;top:497px;width:1px;height:21px;background:#e2e2e2"></div>
<div class="a" style="left:549px;top:517px;width:74px;height:1px;background:#e2e2e2"></div>
<div class="a" style="left:624px;top:497px;width:74px;height:20px;background:#f9f9f9"></div>
<div class="a" style="left:698px;top:497px;width:1px;height:21px;background:#e2e2e2"></div>
<div class="a" style="left:624px;top:517px;width:74px;height:1px;background:#e2e2e2"></div>
<div class="a" style="left:699px;top:497px;width:74px;height:20px;background:#f9f9f9"></div>
<div class="a" style="left:773px;top:497px;width:1px;height:21px;background:#e2e2e2"></div>
<div class="a" style="left:699px;top:517px;width:74px;height:1px;background:#e2e2e2"></div>
<div class="a" style="left:774px;top:497px;width:74px;height:20px;background:#f9f9f9"></div>
<div class="a" style="left:848px;top:497px;width:1px;height:21px;background:#e2e2e2"></div>
<div class="a" style="left:774px;top:517px;width:74px;height:1px;background:#e2e2e2"></div>
<div class="a" style="left:849px;top:497px;width:74px;height:20px;background:#f9f9f9"></div>
<div class="a" style="left:923px;top:497px;width:1px;height:21px;background:#e2e2e2"></div>
<div class="a" style="left:849px;top:517px;width:74px;height:1px;background:#e2e2e2"></div>
<div class="a" style="left:924px;top:497px;width:74px;height:20px;background:#f9f9f9"></div>
<div class="a" style="left:998px;top:497px;width:1px;height:21px;background:#e2e2e2"></div>
<div class="a" style="left:924px;top:517px;width:74px;height:1px;background:#e2e2e2"></div>
<div class="cb" style="left:55px;top:501px"></div>
<div class="t" style="left:102.2px;top:502px;font-size:11px;color:#000;transform:scaleX(0.9365);transform-origin:0 0;">D-Nord</div>
<div class="t" style="left:177.2px;top:502px;font-size:11px;color:#000;transform:scaleX(1.0302);transform-origin:0 0;">offen</div>
<div class="t" style="left:252.2px;top:502px;font-size:11px;color:#000;transform:scaleX(0.8694);transform-origin:0 0;">CS NÜRNBE...</div>
<div class="t" style="left:327.2px;top:502px;font-size:11px;color:#000;transform:scaleX(0.8642);transform-origin:0 0;">LKW</div>
<div class="t" style="left:402.2px;top:502px;font-size:11px;color:#000;">28.01.2021...</div>
<div class="t" style="left:477.2px;top:502px;font-size:11px;color:#000;">10455.001-2</div>
<div class="a" style="left:10px;top:518px;width:13px;height:20px;background:#fff"></div>
<div class="a" style="left:11px;top:519px;width:12px;height:18px;background:linear-gradient(#f6f6f6,#e0e0e0)"></div>
<div class="a" style="left:10px;top:538px;width:13px;height:1px;background:#a0a0a0"></div>
<div class="a" style="left:23px;top:518px;width:1px;height:21px;background:#9c9c9c"></div>
<div class="a" style="left:24px;top:518px;width:74px;height:20px;background:#f9f9f9"></div>
<div class="a" style="left:98px;top:518px;width:1px;height:21px;background:#e2e2e2"></div>
<div class="a" style="left:24px;top:538px;width:74px;height:1px;background:#e2e2e2"></div>
<div class="a" style="left:99px;top:518px;width:74px;height:20px;background:#f9f9f9"></div>
<div class="a" style="left:173px;top:518px;width:1px;height:21px;background:#e2e2e2"></div>
<div class="a" style="left:99px;top:538px;width:74px;height:1px;background:#e2e2e2"></div>
<div class="a" style="left:174px;top:518px;width:74px;height:20px;background:#ff0000"></div>
<div class="a" style="left:248px;top:518px;width:1px;height:21px;background:#e2e2e2"></div>
<div class="a" style="left:174px;top:538px;width:74px;height:1px;background:#e2e2e2"></div>
<div class="a" style="left:249px;top:518px;width:74px;height:20px;background:#e6f3fb"></div>
<div class="a" style="left:323px;top:518px;width:1px;height:21px;background:#e2e2e2"></div>
<div class="a" style="left:249px;top:538px;width:74px;height:1px;background:#e2e2e2"></div>
<div class="a" style="left:324px;top:518px;width:74px;height:20px;background:#e6f3fb"></div>
<div class="a" style="left:398px;top:518px;width:1px;height:21px;background:#e2e2e2"></div>
<div class="a" style="left:324px;top:538px;width:74px;height:1px;background:#e2e2e2"></div>
<div class="a" style="left:399px;top:518px;width:74px;height:20px;background:#e6f3fb"></div>
<div class="a" style="left:473px;top:518px;width:1px;height:21px;background:#e2e2e2"></div>
<div class="a" style="left:399px;top:538px;width:74px;height:1px;background:#e2e2e2"></div>
<div class="a" style="left:474px;top:518px;width:74px;height:20px;background:#e6f3fb"></div>
<div class="a" style="left:548px;top:518px;width:1px;height:21px;background:#e2e2e2"></div>
<div class="a" style="left:474px;top:538px;width:74px;height:1px;background:#e2e2e2"></div>
<div class="a" style="left:549px;top:518px;width:74px;height:20px;background:#e6f3fb"></div>
<div class="a" style="left:623px;top:518px;width:1px;height:21px;background:#e2e2e2"></div>
<div class="a" style="left:549px;top:538px;width:74px;height:1px;background:#e2e2e2"></div>
<div class="a" style="left:624px;top:518px;width:74px;height:20px;background:#f9f9f9"></div>
<div class="a" style="left:698px;top:518px;width:1px;height:21px;background:#e2e2e2"></div>
<div class="a" style="left:624px;top:538px;width:74px;height:1px;background:#e2e2e2"></div>
<div class="a" style="left:699px;top:518px;width:74px;height:20px;background:#f9f9f9"></div>
<div class="a" style="left:773px;top:518px;width:1px;height:21px;background:#e2e2e2"></div>
<div class="a" style="left:699px;top:538px;width:74px;height:1px;background:#e2e2e2"></div>
<div class="a" style="left:774px;top:518px;width:74px;height:20px;background:#f9f9f9"></div>
<div class="a" style="left:848px;top:518px;width:1px;height:21px;background:#e2e2e2"></div>
<div class="a" style="left:774px;top:538px;width:74px;height:1px;background:#e2e2e2"></div>
<div class="a" style="left:849px;top:518px;width:74px;height:20px;background:#f9f9f9"></div>
<div class="a" style="left:923px;top:518px;width:1px;height:21px;background:#e2e2e2"></div>
<div class="a" style="left:849px;top:538px;width:74px;height:1px;background:#e2e2e2"></div>
<div class="a" style="left:924px;top:518px;width:74px;height:20px;background:#f9f9f9"></div>
<div class="a" style="left:998px;top:518px;width:1px;height:21px;background:#e2e2e2"></div>
<div class="a" style="left:924px;top:538px;width:74px;height:1px;background:#e2e2e2"></div>
<div class="cb" style="left:55px;top:522px"></div>
<div class="t" style="left:102.2px;top:523px;font-size:11px;color:#000;transform:scaleX(0.9365);transform-origin:0 0;">D-Nord</div>
<div class="t" style="left:177.2px;top:523px;font-size:11px;color:#000;transform:scaleX(1.0302);transform-origin:0 0;">offen</div>
<div class="t" style="left:252.2px;top:523px;font-size:11px;color:#000;transform:scaleX(0.8694);transform-origin:0 0;">CS NÜRNBE...</div>
<div class="t" style="left:327.2px;top:523px;font-size:11px;color:#000;transform:scaleX(0.8642);transform-origin:0 0;">LKW</div>
<div class="t" style="left:402.2px;top:523px;font-size:11px;color:#000;">25.02.2021...</div>
<div class="t" style="left:477.2px;top:523px;font-size:11px;color:#000;">10654.004-1</div>
<div class="a" style="left:10px;top:539px;width:13px;height:20px;background:#fff"></div>
<div class="a" style="left:11px;top:540px;width:12px;height:18px;background:linear-gradient(#f6f6f6,#e0e0e0)"></div>
<div class="a" style="left:10px;top:559px;width:13px;height:1px;background:#a0a0a0"></div>
<div class="a" style="left:23px;top:539px;width:1px;height:21px;background:#9c9c9c"></div>
<div class="a" style="left:24px;top:539px;width:74px;height:20px;background:#f9f9f9"></div>
<div class="a" style="left:98px;top:539px;width:1px;height:21px;background:#e2e2e2"></div>
<div class="a" style="left:24px;top:559px;width:74px;height:1px;background:#e2e2e2"></div>
<div class="a" style="left:99px;top:539px;width:74px;height:20px;background:#f9f9f9"></div>
<div class="a" style="left:173px;top:539px;width:1px;height:21px;background:#e2e2e2"></div>
<div class="a" style="left:99px;top:559px;width:74px;height:1px;background:#e2e2e2"></div>
<div class="a" style="left:174px;top:539px;width:74px;height:20px;background:#ff0000"></div>
<div class="a" style="left:248px;top:539px;width:1px;height:21px;background:#e2e2e2"></div>
<div class="a" style="left:174px;top:559px;width:74px;height:1px;background:#e2e2e2"></div>
<div class="a" style="left:249px;top:539px;width:74px;height:20px;background:#eff8e4"></div>
<div class="a" style="left:323px;top:539px;width:1px;height:21px;background:#e2e2e2"></div>
<div class="a" style="left:249px;top:559px;width:74px;height:1px;background:#e2e2e2"></div>
<div class="a" style="left:324px;top:539px;width:74px;height:20px;background:#eff8e4"></div>
<div class="a" style="left:398px;top:539px;width:1px;height:21px;background:#e2e2e2"></div>
<div class="a" style="left:324px;top:559px;width:74px;height:1px;background:#e2e2e2"></div>
<div class="a" style="left:399px;top:539px;width:74px;height:20px;background:#eff8e4"></div>
<div class="a" style="left:473px;top:539px;width:1px;height:21px;background:#e2e2e2"></div>
<div class="a" style="left:399px;top:559px;width:74px;height:1px;background:#e2e2e2"></div>
<div class="a" style="left:474px;top:539px;width:74px;height:20px;background:#eff8e4"></div>
<div class="a" style="left:548px;top:539px;width:1px;height:21px;background:#e2e2e2"></div>
<div class="a" style="left:474px;top:559px;width:74px;height:1px;background:#e2e2e2"></div>
<div class="a" style="left:549px;top:539px;width:74px;height:20px;background:#eff8e4"></div>
<div class="a" style="left:623px;top:539px;width:1px;height:21px;background:#e2e2e2"></div>
<div class="a" style="left:549px;top:559px;width:74px;height:1px;background:#e2e2e2"></div>
<div class="a" style="left:624px;top:539px;width:74px;height:20px;background:#f9f9f9"></div>
<div class="a" style="left:698px;top:539px;width:1px;height:21px;background:#e2e2e2"></div>
<div class="a" style="left:624px;top:559px;width:74px;height:1px;background:#e2e2e2"></div>
<div class="a" style="left:699px;top:539px;width:74px;height:20px;background:#f9f9f9"></div>
<div class="a" style="left:773px;top:539px;width:1px;height:21px;background:#e2e2e2"></div>
<div class="a" style="left:699px;top:559px;width:74px;height:1px;background:#e2e2e2"></div>
<div class="a" style="left:774px;top:539px;width:74px;height:20px;background:#f9f9f9"></div>
<div class="a" style="left:848px;top:539px;width:1px;height:21px;background:#e2e2e2"></div>
<div class="a" style="left:774px;top:559px;width:74px;height:1px;background:#e2e2e2"></div>
<div class="a" style="left:849px;top:539px;width:74px;height:20px;background:#f9f9f9"></div>
<div class="a" style="left:923px;top:539px;width:1px;height:21px;background:#e2e2e2"></div>
<div class="a" style="left:849px;top:559px;width:74px;height:1px;background:#e2e2e2"></div>
<div class="a" style="left:924px;top:539px;width:74px;height:20px;background:#f9f9f9"></div>
<div class="a" style="left:998px;top:539px;width:1px;height:21px;background:#e2e2e2"></div>
<div class="a" style="left:924px;top:559px;width:74px;height:1px;background:#e2e2e2"></div>
<div class="cb" style="left:55px;top:543px"></div>
<div class="t" style="left:102.2px;top:544px;font-size:11px;color:#000;transform:scaleX(0.9365);transform-origin:0 0;">D-Nord</div>
<div class="t" style="left:177.2px;top:544px;font-size:11px;color:#000;transform:scaleX(1.0302);transform-origin:0 0;">offen</div>
<div class="t" style="left:252.2px;top:544px;font-size:11px;color:#000;transform:scaleX(0.8694);transform-origin:0 0;">CS NÜRNBE...</div>
<div class="t" style="left:327.2px;top:544px;font-size:11px;color:#000;transform:scaleX(0.8642);transform-origin:0 0;">LKW</div>
<div class="t" style="left:402.2px;top:544px;font-size:11px;color:#000;">25.02.2021...</div>
<div class="t" style="left:477.2px;top:544px;font-size:11px;color:#000;">10654.005-1</div>
<div class="a" style="left:10px;top:560px;width:13px;height:20px;background:#fff"></div>
<div class="a" style="left:11px;top:561px;width:12px;height:18px;background:linear-gradient(#f6f6f6,#e0e0e0)"></div>
<div class="a" style="left:10px;top:580px;width:13px;height:1px;background:#a0a0a0"></div>
<div class="a" style="left:23px;top:560px;width:1px;height:21px;background:#9c9c9c"></div>
<div class="a" style="left:24px;top:560px;width:74px;height:20px;background:#f9f9f9"></div>
<div class="a" style="left:98px;top:560px;width:1px;height:21px;background:#e2e2e2"></div>
<div class="a" style="left:24px;top:580px;width:74px;height:1px;background:#e2e2e2"></div>
<div class="a" style="left:99px;top:560px;width:74px;height:20px;background:#f9f9f9"></div>
<div class="a" style="left:173px;top:560px;width:1px;height:21px;background:#e2e2e2"></div>
<div class="a" style="left:99px;top:580px;width:74px;height:1px;background:#e2e2e2"></div>
<div class="a" style="left:174px;top:560px;width:74px;height:20px;background:#ff0000"></div>
<div class="a" style="left:248px;top:560px;width:1px;height:21px;background:#e2e2e2"></div>
<div class="a" style="left:174px;top:580px;width:74px;height:1px;background:#e2e2e2"></div>
<div class="a" style="left:249px;top:560px;width:74px;height:20px;background:#e6f3fb"></div>
<div class="a" style="left:323px;top:560px;width:1px;height:21px;background:#e2e2e2"></div>
<div class="a" style="left:249px;top:580px;width:74px;height:1px;background:#e2e2e2"></div>
<div class="a" style="left:324px;top:560px;width:74px;height:20px;background:#e6f3fb"></div>
<div class="a" style="left:398px;top:560px;width:1px;height:21px;background:#e2e2e2"></div>
<div class="a" style="left:324px;top:580px;width:74px;height:1px;background:#e2e2e2"></div>
<div class="a" style="left:399px;top:560px;width:74px;height:20px;background:#e6f3fb"></div>
<div class="a" style="left:473px;top:560px;width:1px;height:21px;background:#e2e2e2"></div>
<div class="a" style="left:399px;top:580px;width:74px;height:1px;background:#e2e2e2"></div>
<div class="a" style="left:474px;top:560px;width:74px;height:20px;background:#e6f3fb"></div>
<div class="a" style="left:548px;top:560px;width:1px;height:21px;background:#e2e2e2"></div>
<div class="a" style="left:474px;top:580px;width:74px;height:1px;background:#e2e2e2"></div>
<div class="a" style="left:549px;top:560px;width:74px;height:20px;background:#e6f3fb"></div>
<div class="a" style="left:623px;top:560px;width:1px;height:21px;background:#e2e2e2"></div>
<div class="a" style="left:549px;top:580px;width:74px;height:1px;background:#e2e2e2"></div>
<div class="a" style="left:624px;top:560px;width:74px;height:20px;background:#f9f9f9"></div>
<div class="a" style="left:698px;top:560px;width:1px;height:21px;background:#e2e2e2"></div>
<div class="a" style="left:624px;top:580px;width:74px;height:1px;background:#e2e2e2"></div>
<div class="a" style="left:699px;top:560px;width:74px;height:20px;background:#f9f9f9"></div>
<div class="a" style="left:773px;top:560px;width:1px;height:21px;background:#e2e2e2"></div>
<div class="a" style="left:699px;top:580px;width:74px;height:1px;background:#e2e2e2"></div>
<div class="a" style="left:774px;top:560px;width:74px;height:20px;background:#f9f9f9"></div>
<div class="a" style="left:848px;top:560px;width:1px;height:21px;background:#e2e2e2"></div>
<div class="a" style="left:774px;top:580px;width:74px;height:1px;background:#e2e2e2"></div>
<div class="a" style="left:849px;top:560px;width:74px;height:20px;background:#f9f9f9"></div>
<div class="a" style="left:923px;top:560px;width:1px;height:21px;background:#e2e2e2"></div>
<div class="a" style="left:849px;top:580px;width:74px;height:1px;background:#e2e2e2"></div>
<div class="a" style="left:924px;top:560px;width:74px;height:20px;background:#f9f9f9"></div>
<div class="a" style="left:998px;top:560px;width:1px;height:21px;background:#e2e2e2"></div>
<div class="a" style="left:924px;top:580px;width:74px;height:1px;background:#e2e2e2"></div>
<div class="cb" style="left:55px;top:564px"></div>
<div class="t" style="left:102.2px;top:565px;font-size:11px;color:#000;transform:scaleX(0.9697);transform-origin:0 0;">Schnellerfasst</div>
<div class="t" style="left:177.2px;top:565px;font-size:11px;color:#000;transform:scaleX(1.0302);transform-origin:0 0;">offen</div>
<div class="t" style="left:252.2px;top:565px;font-size:11px;color:#000;transform:scaleX(0.8694);transform-origin:0 0;">CS NÜRNBE...</div>
<div class="t" style="left:327.2px;top:565px;font-size:11px;color:#000;transform:scaleX(0.8642);transform-origin:0 0;">LKW</div>
<div class="t" style="left:402.2px;top:565px;font-size:11px;color:#000;">09.02.2021...</div>
<div class="t" style="left:477.2px;top:565px;font-size:11px;color:#000;">10574.002-1</div>
<div class="a" style="left:10px;top:581px;width:13px;height:20px;background:#fff"></div>
<div class="a" style="left:11px;top:582px;width:12px;height:18px;background:linear-gradient(#f6f6f6,#e0e0e0)"></div>
<div class="a" style="left:10px;top:601px;width:13px;height:1px;background:#a0a0a0"></div>
<div class="a" style="left:23px;top:581px;width:1px;height:21px;background:#9c9c9c"></div>
<div class="a" style="left:24px;top:581px;width:74px;height:20px;background:#f9f9f9"></div>
<div class="a" style="left:98px;top:581px;width:1px;height:21px;background:#e2e2e2"></div>
<div class="a" style="left:24px;top:601px;width:74px;height:1px;background:#e2e2e2"></div>
<div class="a" style="left:99px;top:581px;width:74px;height:20px;background:#f9f9f9"></div>
<div class="a" style="left:173px;top:581px;width:1px;height:21px;background:#e2e2e2"></div>
<div class="a" style="left:99px;top:601px;width:74px;height:1px;background:#e2e2e2"></div>
<div class="a" style="left:174px;top:581px;width:74px;height:20px;background:#ff0000"></div>
<div class="a" style="left:248px;top:581px;width:1px;height:21px;background:#e2e2e2"></div>
<div class="a" style="left:174px;top:601px;width:74px;height:1px;background:#e2e2e2"></div>
<div class="a" style="left:249px;top:581px;width:74px;height:20px;background:#eff8e4"></div>
<div class="a" style="left:323px;top:581px;width:1px;height:21px;background:#e2e2e2"></div>
<div class="a" style="left:249px;top:601px;width:74px;height:1px;background:#e2e2e2"></div>
<div class="a" style="left:324px;top:581px;width:74px;height:20px;background:#eff8e4"></div>
<div class="a" style="left:398px;top:581px;width:1px;height:21px;background:#e2e2e2"></div>
<div class="a" style="left:324px;top:601px;width:74px;height:1px;background:#e2e2e2"></div>
<div class="a" style="left:399px;top:581px;width:74px;height:20px;background:#eff8e4"></div>
<div class="a" style="left:473px;top:581px;width:1px;height:21px;background:#e2e2e2"></div>
<div class="a" style="left:399px;top:601px;width:74px;height:1px;background:#e2e2e2"></div>
<div class="a" style="left:474px;top:581px;width:74px;height:20px;background:#eff8e4"></div>
<div class="a" style="left:548px;top:581px;width:1px;height:21px;background:#e2e2e2"></div>
<div class="a" style="left:474px;top:601px;width:74px;height:1px;background:#e2e2e2"></div>
<div class="a" style="left:549px;top:581px;width:74px;height:20px;background:#eff8e4"></div>
<div class="a" style="left:623px;top:581px;width:1px;height:21px;background:#e2e2e2"></div>
<div class="a" style="left:549px;top:601px;width:74px;height:1px;background:#e2e2e2"></div>
<div class="a" style="left:624px;top:581px;width:74px;height:20px;background:#f9f9f9"></div>
<div class="a" style="left:698px;top:581px;width:1px;height:21px;background:#e2e2e2"></div>
<div class="a" style="left:624px;top:601px;width:74px;height:1px;background:#e2e2e2"></div>
<div class="a" style="left:699px;top:581px;width:74px;height:20px;background:#f9f9f9"></div>
<div class="a" style="left:773px;top:581px;width:1px;height:21px;background:#e2e2e2"></div>
<div class="a" style="left:699px;top:601px;width:74px;height:1px;background:#e2e2e2"></div>
<div class="a" style="left:774px;top:581px;width:74px;height:20px;background:#f9f9f9"></div>
<div class="a" style="left:848px;top:581px;width:1px;height:21px;background:#e2e2e2"></div>
<div class="a" style="left:774px;top:601px;width:74px;height:1px;background:#e2e2e2"></div>
<div class="a" style="left:849px;top:581px;width:74px;height:20px;background:#f9f9f9"></div>
<div class="a" style="left:923px;top:581px;width:1px;height:21px;background:#e2e2e2"></div>
<div class="a" style="left:849px;top:601px;width:74px;height:1px;background:#e2e2e2"></div>
<div class="a" style="left:924px;top:581px;width:74px;height:20px;background:#f9f9f9"></div>
<div class="a" style="left:998px;top:581px;width:1px;height:21px;background:#e2e2e2"></div>
<div class="a" style="left:924px;top:601px;width:74px;height:1px;background:#e2e2e2"></div>
<div class="cb" style="left:55px;top:585px"></div>
<div class="t" style="left:102.2px;top:586px;font-size:11px;color:#000;transform:scaleX(0.9697);transform-origin:0 0;">Schnellerfasst</div>
<div class="t" style="left:177.2px;top:586px;font-size:11px;color:#000;transform:scaleX(1.0302);transform-origin:0 0;">offen</div>
<div class="t" style="left:252.2px;top:586px;font-size:11px;color:#000;transform:scaleX(0.8694);transform-origin:0 0;">CS NÜRNBE...</div>
<div class="t" style="left:327.2px;top:586px;font-size:11px;color:#000;transform:scaleX(0.8642);transform-origin:0 0;">LKW</div>
<div class="t" style="left:402.2px;top:586px;font-size:11px;color:#000;">09.02.2021...</div>
<div class="t" style="left:477.2px;top:586px;font-size:11px;color:#000;">10574.003-1</div>
<div class="a" style="left:10px;top:602px;width:13px;height:20px;background:#fff"></div>
<div class="a" style="left:11px;top:603px;width:12px;height:18px;background:linear-gradient(#f6f6f6,#e0e0e0)"></div>
<div class="a" style="left:10px;top:622px;width:13px;height:1px;background:#a0a0a0"></div>
<div class="a" style="left:23px;top:602px;width:1px;height:21px;background:#9c9c9c"></div>
<div class="a" style="left:24px;top:602px;width:74px;height:20px;background:#f9f9f9"></div>
<div class="a" style="left:98px;top:602px;width:1px;height:21px;background:#e2e2e2"></div>
<div class="a" style="left:24px;top:622px;width:74px;height:1px;background:#e2e2e2"></div>
<div class="a" style="left:99px;top:602px;width:74px;height:20px;background:#f9f9f9"></div>
<div class="a" style="left:173px;top:602px;width:1px;height:21px;background:#e2e2e2"></div>
<div class="a" style="left:99px;top:622px;width:74px;height:1px;background:#e2e2e2"></div>
<div class="a" style="left:174px;top:602px;width:74px;height:20px;background:#ff0000"></div>
<div class="a" style="left:248px;top:602px;width:1px;height:21px;background:#e2e2e2"></div>
<div class="a" style="left:174px;top:622px;width:74px;height:1px;background:#e2e2e2"></div>
<div class="a" style="left:249px;top:602px;width:74px;height:20px;background:#e6f3fb"></div>
<div class="a" style="left:323px;top:602px;width:1px;height:21px;background:#e2e2e2"></div>
<div class="a" style="left:249px;top:622px;width:74px;height:1px;background:#e2e2e2"></div>
<div class="a" style="left:324px;top:602px;width:74px;height:20px;background:#e6f3fb"></div>
<div class="a" style="left:398px;top:602px;width:1px;height:21px;background:#e2e2e2"></div>
<div class="a" style="left:324px;top:622px;width:74px;height:1px;background:#e2e2e2"></div>
<div class="a" style="left:399px;top:602px;width:74px;height:20px;background:#e6f3fb"></div>
<div class="a" style="left:473px;top:602px;width:1px;height:21px;background:#e2e2e2"></div>
<div class="a" style="left:399px;top:622px;width:74px;height:1px;background:#e2e2e2"></div>
<div class="a" style="left:474px;top:602px;width:74px;height:20px;background:#e6f3fb"></div>
<div class="a" style="left:548px;top:602px;width:1px;height:21px;background:#e2e2e2"></div>
<div class="a" style="left:474px;top:622px;width:74px;height:1px;background:#e2e2e2"></div>
<div class="a" style="left:549px;top:602px;width:74px;height:20px;background:#e6f3fb"></div>
<div class="a" style="left:623px;top:602px;width:1px;height:21px;background:#e2e2e2"></div>
<div class="a" style="left:549px;top:622px;width:74px;height:1px;background:#e2e2e2"></div>
<div class="a" style="left:624px;top:602px;width:74px;height:20px;background:#f9f9f9"></div>
<div class="a" style="left:698px;top:602px;width:1px;height:21px;background:#e2e2e2"></div>
<div class="a" style="left:624px;top:622px;width:74px;height:1px;background:#e2e2e2"></div>
<div class="a" style="left:699px;top:602px;width:74px;height:20px;background:#f9f9f9"></div>
<div class="a" style="left:773px;top:602px;width:1px;height:21px;background:#e2e2e2"></div>
<div class="a" style="left:699px;top:622px;width:74px;height:1px;background:#e2e2e2"></div>
<div class="a" style="left:774px;top:602px;width:74px;height:20px;background:#f9f9f9"></div>
<div class="a" style="left:848px;top:602px;width:1px;height:21px;background:#e2e2e2"></div>
<div class="a" style="left:774px;top:622px;width:74px;height:1px;background:#e2e2e2"></div>
<div class="a" style="left:849px;top:602px;width:74px;height:20px;background:#f9f9f9"></div>
<div class="a" style="left:923px;top:602px;width:1px;height:21px;background:#e2e2e2"></div>
<div class="a" style="left:849px;top:622px;width:74px;height:1px;background:#e2e2e2"></div>
<div class="a" style="left:924px;top:602px;width:74px;height:20px;background:#f9f9f9"></div>
<div class="a" style="left:998px;top:602px;width:1px;height:21px;background:#e2e2e2"></div>
<div class="a" style="left:924px;top:622px;width:74px;height:1px;background:#e2e2e2"></div>
<div class="cb" style="left:55px;top:606px"></div>
<div class="t" style="left:102.2px;top:607px;font-size:11px;color:#000;transform:scaleX(0.9697);transform-origin:0 0;">Schnellerfasst</div>
<div class="t" style="left:177.2px;top:607px;font-size:11px;color:#000;transform:scaleX(1.0302);transform-origin:0 0;">offen</div>
<div class="t" style="left:252.2px;top:607px;font-size:11px;color:#000;transform:scaleX(0.8694);transform-origin:0 0;">CS NÜRNBE...</div>
<div class="t" style="left:327.2px;top:607px;font-size:11px;color:#000;transform:scaleX(0.8642);transform-origin:0 0;">LKW</div>
<div class="t" style="left:402.2px;top:607px;font-size:11px;color:#000;">09.02.2021...</div>
<div class="t" style="left:477.2px;top:607px;font-size:11px;color:#000;">10574.004-1</div>
<div class="a" style="left:10px;top:623px;width:13px;height:20px;background:#fff"></div>
<div class="a" style="left:11px;top:624px;width:12px;height:18px;background:linear-gradient(#f6f6f6,#e0e0e0)"></div>
<div class="a" style="left:10px;top:643px;width:13px;height:1px;background:#a0a0a0"></div>
<div class="a" style="left:23px;top:623px;width:1px;height:21px;background:#9c9c9c"></div>
<div class="a" style="left:24px;top:623px;width:74px;height:20px;background:#f9f9f9"></div>
<div class="a" style="left:98px;top:623px;width:1px;height:21px;background:#e2e2e2"></div>
<div class="a" style="left:24px;top:643px;width:74px;height:1px;background:#e2e2e2"></div>
<div class="a" style="left:99px;top:623px;width:74px;height:20px;background:#f9f9f9"></div>
<div class="a" style="left:173px;top:623px;width:1px;height:21px;background:#e2e2e2"></div>
<div class="a" style="left:99px;top:643px;width:74px;height:1px;background:#e2e2e2"></div>
<div class="a" style="left:174px;top:623px;width:74px;height:20px;background:#ff0000"></div>
<div class="a" style="left:248px;top:623px;width:1px;height:21px;background:#e2e2e2"></div>
<div class="a" style="left:174px;top:643px;width:74px;height:1px;background:#e2e2e2"></div>
<div class="a" style="left:249px;top:623px;width:74px;height:20px;background:#eff8e4"></div>
<div class="a" style="left:323px;top:623px;width:1px;height:21px;background:#e2e2e2"></div>
<div class="a" style="left:249px;top:643px;width:74px;height:1px;background:#e2e2e2"></div>
<div class="a" style="left:324px;top:623px;width:74px;height:20px;background:#eff8e4"></div>
<div class="a" style="left:398px;top:623px;width:1px;height:21px;background:#e2e2e2"></div>
<div class="a" style="left:324px;top:643px;width:74px;height:1px;background:#e2e2e2"></div>
<div class="a" style="left:399px;top:623px;width:74px;height:20px;background:#eff8e4"></div>
<div class="a" style="left:473px;top:623px;width:1px;height:21px;background:#e2e2e2"></div>
<div class="a" style="left:399px;top:643px;width:74px;height:1px;background:#e2e2e2"></div>
<div class="a" style="left:474px;top:623px;width:74px;height:20px;background:#eff8e4"></div>
<div class="a" style="left:548px;top:623px;width:1px;height:21px;background:#e2e2e2"></div>
<div class="a" style="left:474px;top:643px;width:74px;height:1px;background:#e2e2e2"></div>
<div class="a" style="left:549px;top:623px;width:74px;height:20px;background:#eff8e4"></div>
<div class="a" style="left:623px;top:623px;width:1px;height:21px;background:#e2e2e2"></div>
<div class="a" style="left:549px;top:643px;width:74px;height:1px;background:#e2e2e2"></div>
<div class="a" style="left:624px;top:623px;width:74px;height:20px;background:#f9f9f9"></div>
<div class="a" style="left:698px;top:623px;width:1px;height:21px;background:#e2e2e2"></div>
<div class="a" style="left:624px;top:643px;width:74px;height:1px;background:#e2e2e2"></div>
<div class="a" style="left:699px;top:623px;width:74px;height:20px;background:#f9f9f9"></div>
<div class="a" style="left:773px;top:623px;width:1px;height:21px;background:#e2e2e2"></div>
<div class="a" style="left:699px;top:643px;width:74px;height:1px;background:#e2e2e2"></div>
<div class="a" style="left:774px;top:623px;width:74px;height:20px;background:#f9f9f9"></div>
<div class="a" style="left:848px;top:623px;width:1px;height:21px;background:#e2e2e2"></div>
<div class="a" style="left:774px;top:643px;width:74px;height:1px;background:#e2e2e2"></div>
<div class="a" style="left:849px;top:623px;width:74px;height:20px;background:#f9f9f9"></div>
<div class="a" style="left:923px;top:623px;width:1px;height:21px;background:#e2e2e2"></div>
<div class="a" style="left:849px;top:643px;width:74px;height:1px;background:#e2e2e2"></div>
<div class="a" style="left:924px;top:623px;width:74px;height:20px;background:#f9f9f9"></div>
<div class="a" style="left:998px;top:623px;width:1px;height:21px;background:#e2e2e2"></div>
<div class="a" style="left:924px;top:643px;width:74px;height:1px;background:#e2e2e2"></div>
<div class="cb" style="left:55px;top:627px"></div>
<div class="t" style="left:102.2px;top:628px;font-size:11px;color:#000;transform:scaleX(0.9697);transform-origin:0 0;">Schnellerfasst</div>
<div class="t" style="left:177.2px;top:628px;font-size:11px;color:#000;transform:scaleX(1.0302);transform-origin:0 0;">offen</div>
<div class="t" style="left:252.2px;top:628px;font-size:11px;color:#000;transform:scaleX(0.8694);transform-origin:0 0;">CS NÜRNBE...</div>
<div class="t" style="left:327.2px;top:628px;font-size:11px;color:#000;transform:scaleX(0.8642);transform-origin:0 0;">LKW</div>
<div class="t" style="left:402.2px;top:628px;font-size:11px;color:#000;">09.02.2021...</div>
<div class="t" style="left:477.2px;top:628px;font-size:11px;color:#000;">10574.005-1</div>
<div class="t" style="left:552.2px;top:628px;font-size:11px;color:#000;transform:scaleX(0.9171);transform-origin:0 0;">TRNUE15422</div>
<div class="a" style="left:10px;top:644px;width:13px;height:20px;background:#fff"></div>
<div class="a" style="left:11px;top:645px;width:12px;height:18px;background:linear-gradient(#f6f6f6,#e0e0e0)"></div>
<div class="a" style="left:10px;top:664px;width:13px;height:1px;background:#a0a0a0"></div>
<div class="a" style="left:23px;top:644px;width:1px;height:21px;background:#9c9c9c"></div>
<div class="a" style="left:24px;top:644px;width:74px;height:20px;background:#f9f9f9"></div>
<div class="a" style="left:98px;top:644px;width:1px;height:21px;background:#e2e2e2"></div>
<div class="a" style="left:24px;top:664px;width:74px;height:1px;background:#e2e2e2"></div>
<div class="a" style="left:99px;top:644px;width:74px;height:20px;background:#f9f9f9"></div>
<div class="a" style="left:173px;top:644px;width:1px;height:21px;background:#e2e2e2"></div>
<div class="a" style="left:99px;top:664px;width:74px;height:1px;background:#e2e2e2"></div>
<div class="a" style="left:174px;top:644px;width:74px;height:20px;background:#ff0000"></div>
<div class="a" style="left:248px;top:644px;width:1px;height:21px;background:#e2e2e2"></div>
<div class="a" style="left:174px;top:664px;width:74px;height:1px;background:#e2e2e2"></div>
<div class="a" style="left:249px;top:644px;width:74px;height:20px;background:#e6f3fb"></div>
<div class="a" style="left:323px;top:644px;width:1px;height:21px;background:#e2e2e2"></div>
<div class="a" style="left:249px;top:664px;width:74px;height:1px;background:#e2e2e2"></div>
<div class="a" style="left:324px;top:644px;width:74px;height:20px;background:#e6f3fb"></div>
<div class="a" style="left:398px;top:644px;width:1px;height:21px;background:#e2e2e2"></div>
<div class="a" style="left:324px;top:664px;width:74px;height:1px;background:#e2e2e2"></div>
<div class="a" style="left:399px;top:644px;width:74px;height:20px;background:#e6f3fb"></div>
<div class="a" style="left:473px;top:644px;width:1px;height:21px;background:#e2e2e2"></div>
<div class="a" style="left:399px;top:664px;width:74px;height:1px;background:#e2e2e2"></div>
<div class="a" style="left:474px;top:644px;width:74px;height:20px;background:#e6f3fb"></div>
<div class="a" style="left:548px;top:644px;width:1px;height:21px;background:#e2e2e2"></div>
<div class="a" style="left:474px;top:664px;width:74px;height:1px;background:#e2e2e2"></div>
<div class="a" style="left:549px;top:644px;width:74px;height:20px;background:#e6f3fb"></div>
<div class="a" style="left:623px;top:644px;width:1px;height:21px;background:#e2e2e2"></div>
<div class="a" style="left:549px;top:664px;width:74px;height:1px;background:#e2e2e2"></div>
<div class="a" style="left:624px;top:644px;width:74px;height:20px;background:#f9f9f9"></div>
<div class="a" style="left:698px;top:644px;width:1px;height:21px;background:#e2e2e2"></div>
<div class="a" style="left:624px;top:664px;width:74px;height:1px;background:#e2e2e2"></div>
<div class="a" style="left:699px;top:644px;width:74px;height:20px;background:#f9f9f9"></div>
<div class="a" style="left:773px;top:644px;width:1px;height:21px;background:#e2e2e2"></div>
<div class="a" style="left:699px;top:664px;width:74px;height:1px;background:#e2e2e2"></div>
<div class="a" style="left:774px;top:644px;width:74px;height:20px;background:#f9f9f9"></div>
<div class="a" style="left:848px;top:644px;width:1px;height:21px;background:#e2e2e2"></div>
<div class="a" style="left:774px;top:664px;width:74px;height:1px;background:#e2e2e2"></div>
<div class="a" style="left:849px;top:644px;width:74px;height:20px;background:#f9f9f9"></div>
<div class="a" style="left:923px;top:644px;width:1px;height:21px;background:#e2e2e2"></div>
<div class="a" style="left:849px;top:664px;width:74px;height:1px;background:#e2e2e2"></div>
<div class="a" style="left:924px;top:644px;width:74px;height:20px;background:#f9f9f9"></div>
<div class="a" style="left:998px;top:644px;width:1px;height:21px;background:#e2e2e2"></div>
<div class="a" style="left:924px;top:664px;width:74px;height:1px;background:#e2e2e2"></div>
<div class="cb" style="left:55px;top:648px"></div>
<div class="t" style="left:102.2px;top:649px;font-size:11px;color:#0000c8;transform:scaleX(0.9140);transform-origin:0 0;">D-Süd</div>
<div class="t" style="left:177.2px;top:649px;font-size:11px;color:#0000c8;transform:scaleX(1.0302);transform-origin:0 0;">offen</div>
<div class="t" style="left:252.2px;top:649px;font-size:11px;color:#0000c8;transform:scaleX(0.8694);transform-origin:0 0;">CS NÜRNBE...</div>
<div class="t" style="left:327.2px;top:649px;font-size:11px;color:#0000c8;transform:scaleX(0.8642);transform-origin:0 0;">LKW</div>
<div class="t" style="left:402.2px;top:649px;font-size:11px;color:#0000c8;">25.01.2021...</div>
<div class="t" style="left:477.2px;top:649px;font-size:11px;color:#0000c8;">10455.002-2</div>
<div class="t" style="left:552.2px;top:649px;font-size:11px;color:#0000c8;transform:scaleX(0.9171);transform-origin:0 0;">TRNUE15036</div>
<div class="a" style="left:10px;top:665px;width:13px;height:20px;background:#fff"></div>
<div class="a" style="left:11px;top:666px;width:12px;height:18px;background:linear-gradient(#f6f6f6,#e0e0e0)"></div>
<div class="a" style="left:10px;top:685px;width:13px;height:1px;background:#a0a0a0"></div>
<div class="a" style="left:23px;top:665px;width:1px;height:21px;background:#9c9c9c"></div>
<div class="a" style="left:24px;top:665px;width:74px;height:20px;background:#f9f9f9"></div>
<div class="a" style="left:98px;top:665px;width:1px;height:21px;background:#e2e2e2"></div>
<div class="a" style="left:24px;top:685px;width:74px;height:1px;background:#e2e2e2"></div>
<div class="a" style="left:99px;top:665px;width:74px;height:20px;background:#f9f9f9"></div>
<div class="a" style="left:173px;top:665px;width:1px;height:21px;background:#e2e2e2"></div>
<div class="a" style="left:99px;top:685px;width:74px;height:1px;background:#e2e2e2"></div>
<div class="a" style="left:174px;top:665px;width:74px;height:20px;background:#ff0000"></div>
<div class="a" style="left:248px;top:665px;width:1px;height:21px;background:#e2e2e2"></div>
<div class="a" style="left:174px;top:685px;width:74px;height:1px;background:#e2e2e2"></div>
<div class="a" style="left:249px;top:665px;width:74px;height:20px;background:#eff8e4"></div>
<div class="a" style="left:323px;top:665px;width:1px;height:21px;background:#e2e2e2"></div>
<div class="a" style="left:249px;top:685px;width:74px;height:1px;background:#e2e2e2"></div>
<div class="a" style="left:324px;top:665px;width:74px;height:20px;background:#eff8e4"></div>
<div class="a" style="left:398px;top:665px;width:1px;height:21px;background:#e2e2e2"></div>
<div class="a" style="left:324px;top:685px;width:74px;height:1px;background:#e2e2e2"></div>
<div class="a" style="left:399px;top:665px;width:74px;height:20px;background:#eff8e4"></div>
<div class="a" style="left:473px;top:665px;width:1px;height:21px;background:#e2e2e2"></div>
<div class="a" style="left:399px;top:685px;width:74px;height:1px;background:#e2e2e2"></div>
<div class="a" style="left:474px;top:665px;width:74px;height:20px;background:#eff8e4"></div>
<div class="a" style="left:548px;top:665px;width:1px;height:21px;background:#e2e2e2"></div>
<div class="a" style="left:474px;top:685px;width:74px;height:1px;background:#e2e2e2"></div>
<div class="a" style="left:549px;top:665px;width:74px;height:20px;background:#eff8e4"></div>
<div class="a" style="left:623px;top:665px;width:1px;height:21px;background:#e2e2e2"></div>
<div class="a" style="left:549px;top:685px;width:74px;height:1px;background:#e2e2e2"></div>
<div class="a" style="left:624px;top:665px;width:74px;height:20px;background:#f9f9f9"></div>
<div class="a" style="left:698px;top:665px;width:1px;height:21px;background:#e2e2e2"></div>
<div class="a" style="left:624px;top:685px;width:74px;height:1px;background:#e2e2e2"></div>
<div class="a" style="left:699px;top:665px;width:74px;height:20px;background:#f9f9f9"></div>
<div class="a" style="left:773px;top:665px;width:1px;height:21px;background:#e2e2e2"></div>
<div class="a" style="left:699px;top:685px;width:74px;height:1px;background:#e2e2e2"></div>
<div class="a" style="left:774px;top:665px;width:74px;height:20px;background:#f9f9f9"></div>
<div class="a" style="left:848px;top:665px;width:1px;height:21px;background:#e2e2e2"></div>
<div class="a" style="left:774px;top:685px;width:74px;height:1px;background:#e2e2e2"></div>
<div class="a" style="left:849px;top:665px;width:74px;height:20px;background:#f9f9f9"></div>
<div class="a" style="left:923px;top:665px;width:1px;height:21px;background:#e2e2e2"></div>
<div class="a" style="left:849px;top:685px;width:74px;height:1px;background:#e2e2e2"></div>
<div class="a" style="left:924px;top:665px;width:74px;height:20px;background:#f9f9f9"></div>
<div class="a" style="left:998px;top:665px;width:1px;height:21px;background:#e2e2e2"></div>
<div class="a" style="left:924px;top:685px;width:74px;height:1px;background:#e2e2e2"></div>
<div class="cb" style="left:55px;top:669px"></div>
<div class="t" style="left:102.2px;top:670px;font-size:11px;color:#0000c8;transform:scaleX(0.9140);transform-origin:0 0;">D-Süd</div>
<div class="t" style="left:177.2px;top:670px;font-size:11px;color:#0000c8;transform:scaleX(1.0302);transform-origin:0 0;">offen</div>
<div class="t" style="left:252.2px;top:670px;font-size:11px;color:#0000c8;transform:scaleX(0.8694);transform-origin:0 0;">CS NÜRNBE...</div>
<div class="t" style="left:327.2px;top:670px;font-size:11px;color:#0000c8;transform:scaleX(0.8642);transform-origin:0 0;">LKW</div>
<div class="t" style="left:402.2px;top:670px;font-size:11px;color:#0000c8;">25.01.2021...</div>
<div class="t" style="left:477.2px;top:670px;font-size:11px;color:#0000c8;">10455.003-2</div>
<div class="t" style="left:552.2px;top:670px;font-size:11px;color:#0000c8;transform:scaleX(0.9171);transform-origin:0 0;">TRNUE15039</div>
<div class="a" style="left:10px;top:686px;width:13px;height:20px;background:#fff"></div>
<div class="a" style="left:11px;top:687px;width:12px;height:18px;background:linear-gradient(#f6f6f6,#e0e0e0)"></div>
<div class="a" style="left:10px;top:706px;width:13px;height:1px;background:#a0a0a0"></div>
<div class="a" style="left:23px;top:686px;width:1px;height:21px;background:#9c9c9c"></div>
<div class="a" style="left:24px;top:686px;width:74px;height:20px;background:#f9f9f9"></div>
<div class="a" style="left:98px;top:686px;width:1px;height:21px;background:#e2e2e2"></div>
<div class="a" style="left:24px;top:706px;width:74px;height:1px;background:#e2e2e2"></div>
<div class="a" style="left:99px;top:686px;width:74px;height:20px;background:#f9f9f9"></div>
<div class="a" style="left:173px;top:686px;width:1px;height:21px;background:#e2e2e2"></div>
<div class="a" style="left:99px;top:706px;width:74px;height:1px;background:#e2e2e2"></div>
<div class="a" style="left:174px;top:686px;width:74px;height:20px;background:#ff0000"></div>
<div class="a" style="left:248px;top:686px;width:1px;height:21px;background:#e2e2e2"></div>
<div class="a" style="left:174px;top:706px;width:74px;height:1px;background:#e2e2e2"></div>
<div class="a" style="left:249px;top:686px;width:74px;height:20px;background:#e6f3fb"></div>
<div class="a" style="left:323px;top:686px;width:1px;height:21px;background:#e2e2e2"></div>
<div class="a" style="left:249px;top:706px;width:74px;height:1px;background:#e2e2e2"></div>
<div class="a" style="left:324px;top:686px;width:74px;height:20px;background:#e6f3fb"></div>
<div class="a" style="left:398px;top:686px;width:1px;height:21px;background:#e2e2e2"></div>
<div class="a" style="left:324px;top:706px;width:74px;height:1px;background:#e2e2e2"></div>
<div class="a" style="left:399px;top:686px;width:74px;height:20px;background:#e6f3fb"></div>
<div class="a" style="left:473px;top:686px;width:1px;height:21px;background:#e2e2e2"></div>
<div class="a" style="left:399px;top:706px;width:74px;height:1px;background:#e2e2e2"></div>
<div class="a" style="left:474px;top:686px;width:74px;height:20px;background:#e6f3fb"></div>
<div class="a" style="left:548px;top:686px;width:1px;height:21px;background:#e2e2e2"></div>
<div class="a" style="left:474px;top:706px;width:74px;height:1px;background:#e2e2e2"></div>
<div class="a" style="left:549px;top:686px;width:74px;height:20px;background:#e6f3fb"></div>
<div class="a" style="left:623px;top:686px;width:1px;height:21px;background:#e2e2e2"></div>
<div class="a" style="left:549px;top:706px;width:74px;height:1px;background:#e2e2e2"></div>
<div class="a" style="left:624px;top:686px;width:74px;height:20px;background:#f9f9f9"></div>
<div class="a" style="left:698px;top:686px;width:1px;height:21px;background:#e2e2e2"></div>
<div class="a" style="left:624px;top:706px;width:74px;height:1px;background:#e2e2e2"></div>
<div class="a" style="left:699px;top:686px;width:74px;height:20px;background:#f9f9f9"></div>
<div class="a" style="left:773px;top:686px;width:1px;height:21px;background:#e2e2e2"></div>
<div class="a" style="left:699px;top:706px;width:74px;height:1px;background:#e2e2e2"></div>
<div class="a" style="left:774px;top:686px;width:74px;height:20px;background:#f9f9f9"></div>
<div class="a" style="left:848px;top:686px;width:1px;height:21px;background:#e2e2e2"></div>
<div class="a" style="left:774px;top:706px;width:74px;height:1px;background:#e2e2e2"></div>
<div class="a" style="left:849px;top:686px;width:74px;height:20px;background:#f9f9f9"></div>
<div class="a" style="left:923px;top:686px;width:1px;height:21px;background:#e2e2e2"></div>
<div class="a" style="left:849px;top:706px;width:74px;height:1px;background:#e2e2e2"></div>
<div class="a" style="left:924px;top:686px;width:74px;height:20px;background:#f9f9f9"></div>
<div class="a" style="left:998px;top:686px;width:1px;height:21px;background:#e2e2e2"></div>
<div class="a" style="left:924px;top:706px;width:74px;height:1px;background:#e2e2e2"></div>
<div class="cb" style="left:55px;top:690px"></div>
<div class="t" style="left:102.2px;top:691px;font-size:11px;color:#0000c8;transform:scaleX(0.9140);transform-origin:0 0;">D-Süd</div>
<div class="t" style="left:177.2px;top:691px;font-size:11px;color:#0000c8;transform:scaleX(1.0302);transform-origin:0 0;">offen</div>
<div class="t" style="left:252.2px;top:691px;font-size:11px;color:#0000c8;transform:scaleX(0.8694);transform-origin:0 0;">CS NÜRNBE...</div>
<div class="t" style="left:327.2px;top:691px;font-size:11px;color:#0000c8;transform:scaleX(0.8642);transform-origin:0 0;">LKW</div>
<div class="t" style="left:402.2px;top:691px;font-size:11px;color:#0000c8;">25.01.2021...</div>
<div class="t" style="left:477.2px;top:691px;font-size:11px;color:#0000c8;">10455.004-2</div>
<div class="t" style="left:552.2px;top:691px;font-size:11px;color:#0000c8;transform:scaleX(0.9171);transform-origin:0 0;">TRNUE15042</div>
<div class="a" style="left:10px;top:707px;width:13px;height:20px;background:#fff"></div>
<div class="a" style="left:11px;top:708px;width:12px;height:18px;background:linear-gradient(#f6f6f6,#e0e0e0)"></div>
<div class="a" style="left:10px;top:727px;width:13px;height:1px;background:#a0a0a0"></div>
<div class="a" style="left:23px;top:707px;width:1px;height:21px;background:#9c9c9c"></div>
<div class="a" style="left:24px;top:707px;width:74px;height:20px;background:#f9f9f9"></div>
<div class="a" style="left:98px;top:707px;width:1px;height:21px;background:#e2e2e2"></div>
<div class="a" style="left:24px;top:727px;width:74px;height:1px;background:#e2e2e2"></div>
<div class="a" style="left:99px;top:707px;width:74px;height:20px;background:#f9f9f9"></div>
<div class="a" style="left:173px;top:707px;width:1px;height:21px;background:#e2e2e2"></div>
<div class="a" style="left:99px;top:727px;width:74px;height:1px;background:#e2e2e2"></div>
<div class="a" style="left:174px;top:707px;width:74px;height:20px;background:#ff0000"></div>
<div class="a" style="left:248px;top:707px;width:1px;height:21px;background:#e2e2e2"></div>
<div class="a" style="left:174px;top:727px;width:74px;height:1px;background:#e2e2e2"></div>
<div class="a" style="left:249px;top:707px;width:74px;height:20px;background:#eff8e4"></div>
<div class="a" style="left:323px;top:707px;width:1px;height:21px;background:#e2e2e2"></div>
<div class="a" style="left:249px;top:727px;width:74px;height:1px;background:#e2e2e2"></div>
<div class="a" style="left:324px;top:707px;width:74px;height:20px;background:#eff8e4"></div>
<div class="a" style="left:398px;top:707px;width:1px;height:21px;background:#e2e2e2"></div>
<div class="a" style="left:324px;top:727px;width:74px;height:1px;background:#e2e2e2"></div>
<div class="a" style="left:399px;top:707px;width:74px;height:20px;background:#eff8e4"></div>
<div class="a" style="left:473px;top:707px;width:1px;height:21px;background:#e2e2e2"></div>
<div class="a" style="left:399px;top:727px;width:74px;height:1px;background:#e2e2e2"></div>
<div class="a" style="left:474px;top:707px;width:74px;height:20px;background:#eff8e4"></div>
<div class="a" style="left:548px;top:707px;width:1px;height:21px;background:#e2e2e2"></div>
<div class="a" style="left:474px;top:727px;width:74px;height:1px;background:#e2e2e2"></div>
<div class="a" style="left:549px;top:707px;width:74px;height:20px;background:#eff8e4"></div>
<div class="a" style="left:623px;top:707px;width:1px;height:21px;background:#e2e2e2"></div>
<div class="a" style="left:549px;top:727px;width:74px;height:1px;background:#e2e2e2"></div>
<div class="a" style="left:624px;top:707px;width:74px;height:20px;background:#f9f9f9"></div>
<div class="a" style="left:698px;top:707px;width:1px;height:21px;background:#e2e2e2"></div>
<div class="a" style="left:624px;top:727px;width:74px;height:1px;background:#e2e2e2"></div>
<div class="a" style="left:699px;top:707px;width:74px;height:20px;background:#f9f9f9"></div>
<div class="a" style="left:773px;top:707px;width:1px;height:21px;background:#e2e2e2"></div>
<div class="a" style="left:699px;top:727px;width:74px;height:1px;background:#e2e2e2"></div>
<div class="a" style="left:774px;top:707px;width:74px;height:20px;background:#f9f9f9"></div>
<div class="a" style="left:848px;top:707px;width:1px;height:21px;background:#e2e2e2"></div>
<div class="a" style="left:774px;top:727px;width:74px;height:1px;background:#e2e2e2"></div>
<div class="a" style="left:849px;top:707px;width:74px;height:20px;background:#f9f9f9"></div>
<div class="a" style="left:923px;top:707px;width:1px;height:21px;background:#e2e2e2"></div>
<div class="a" style="left:849px;top:727px;width:74px;height:1px;background:#e2e2e2"></div>
<div class="a" style="left:924px;top:707px;width:74px;height:20px;background:#f9f9f9"></div>
<div class="a" style="left:998px;top:707px;width:1px;height:21px;background:#e2e2e2"></div>
<div class="a" style="left:924px;top:727px;width:74px;height:1px;background:#e2e2e2"></div>
<div class="cb" style="left:55px;top:711px"></div>
<div class="t" style="left:102.2px;top:712px;font-size:11px;color:#0000c8;transform:scaleX(0.9140);transform-origin:0 0;">D-Süd</div>
<div class="t" style="left:177.2px;top:712px;font-size:11px;color:#0000c8;transform:scaleX(1.0302);transform-origin:0 0;">offen</div>
<div class="t" style="left:252.2px;top:712px;font-size:11px;color:#0000c8;transform:scaleX(0.8694);transform-origin:0 0;">CS NÜRNBE...</div>
<div class="t" style="left:327.2px;top:712px;font-size:11px;color:#0000c8;transform:scaleX(0.8642);transform-origin:0 0;">LKW</div>
<div class="t" style="left:402.2px;top:712px;font-size:11px;color:#0000c8;">25.01.2021...</div>
<div class="t" style="left:477.2px;top:712px;font-size:11px;color:#0000c8;">10455.005-2</div>
<div class="t" style="left:552.2px;top:712px;font-size:11px;color:#0000c8;transform:scaleX(0.9171);transform-origin:0 0;">TRNUE15045</div>
<div class="a" style="left:9px;top:723px;width:995px;height:1px;background:#9c9c9c"></div>
<div class="a" style="left:9px;top:724px;width:995px;height:23px;background:linear-gradient(#fdfdfd 0,#fdfdfd 1px,#eeeeee 2px,#e6e6e6 80%,#dedede);border-left:1px solid #9c9c9c"></div>
<div class="a" style="left:9px;top:747px;width:995px;height:1px;background:#a0a0a0"></div>
<div class="a" style="left:9px;top:748px;width:995px;height:1px;background:#f0f0f0"></div>
<div class="a" style="left:9px;top:749px;width:995px;height:17px;background:linear-gradient(#e8f2fc,#ffffff 50%,#f4f9fe);border:1px solid #92c0ec;border-radius:3px"></div>
<div class="a" style="left:9px;top:749px;width:14px;height:17px;background:linear-gradient(#f6fbff,#d6ecfd 50%,#b4dcfb);border:1px solid #92c0ec;border-radius:3px"></div>
<svg class="a" style="left:12px;top:753px" width="7" height="9" viewBox="0 0 7 9"><path d="M5.5 1l-3.5 3.5 3.5 3.5" fill="none" stroke="#1f6ad6" stroke-width="2"/></svg>
<div class="a" style="left:23px;top:749px;width:3px;height:17px;background:linear-gradient(90deg,#fff,#dceefc);border-left:1px solid #c0dcf6"></div>
<div class="a" style="left:26px;top:749px;width:749px;height:17px;background:linear-gradient(#f6fbff,#e4f2fd 40%,#c4e3fa 50%,#86c7f7 52%,#a6d9fa 85%,#d4eefd);border:1px solid #7fb8ea;border-radius:3px"></div>
<div class="a" style="left:398px;top:753px;width:1px;height:8px;background:#2f70d0;box-shadow:2px 0 0 #2f70d0,4px 0 0 #2f70d0"></div>
<div class="a" style="left:7px;top:772px;width:995px;height:24px;background:linear-gradient(#e6e6e6,#dadada)"></div>
<div class="a" style="left:7px;top:772px;width:104px;height:20px;background:linear-gradient(#f4f4f4,#e6e6e6);border:1px solid #b0b0b0;border-top:none;border-radius:0 0 4px 4px;box-shadow:inset 1px 0 0 #fff"></div>
<div class="t" style="left:32px;top:778px;font-size:11.5px;color:#1a1a1a;transform:scaleX(0.9269);transform-origin:0 0;">Containerdispo</div>
<div class="a" style="left:113px;top:772px;width:108px;height:20px;background:linear-gradient(#f4f4f4,#e6e6e6);border:1px solid #b0b0b0;border-top:none;border-radius:0 0 4px 4px;box-shadow:inset 1px 0 0 #fff"></div>
<div class="t" style="left:138.6px;top:778px;font-size:11.5px;color:#1a1a1a;transform:scaleX(0.9722);transform-origin:0 0;">Offene Fahrten</div>
<div class="a" style="left:223px;top:772px;width:92px;height:22px;background:#fafafa;border:1px solid #b0b0b0;border-top:none;border-radius:0 0 4px 4px;box-shadow:inset 1px 0 0 #fff"></div>
<div class="t" style="left:249px;top:779px;font-size:11.5px;color:#1a1a1a;transform:scaleX(0.9128);transform-origin:0 0;">Alle Fahrten</div>
<div class="a" style="left:317px;top:772px;width:114px;height:20px;background:linear-gradient(#f4f4f4,#e6e6e6);border:1px solid #b0b0b0;border-top:none;border-radius:0 0 4px 4px;box-shadow:inset 1px 0 0 #fff"></div>
<div class="t" style="left:341.5px;top:778px;font-size:11.5px;color:#1a1a1a;transform:scaleX(0.9147);transform-origin:0 0;">Schnellerfassung</div>
<svg class="a" style="left:11px;top:776px" width="19" height="17" viewBox="0 0 19 17"><rect x="1.5" y="1.5" width="11" height="9" rx="1" fill="#e9b478" stroke="#d4883c"/><rect x="2" y="3" width="10" height="1.5" fill="#d8d870"/><rect x="2" y="4.5" width="10" height="1.5" fill="#fff"/><rect x="2" y="6" width="10" height="1.5" fill="#3a7adc"/><rect x="12.5" y="3.5" width="4.5" height="6.5" rx="1" fill="#dff0ff" stroke="#2a6ad8"/><g transform="translate(5,9)"><ellipse cx="4.2" cy="4" rx="3.4" ry="3.1" fill="#d4d4d4" stroke="#5a5a5a" stroke-width="1.2"/><ellipse cx="9.8" cy="4" rx="3.4" ry="3.1" fill="none" stroke="#5a5a5a" stroke-width="1.2"/><rect x="4" y="3.2" width="6" height="1.7" fill="#2e2e2e"/></g></svg>
<svg class="a" style="left:120px;top:778px" width="15" height="9" viewBox="0 0 15 9"><ellipse cx="4.2" cy="4" rx="3.4" ry="3.1" fill="#d4d4d4" stroke="#5a5a5a" stroke-width="1.2"/><ellipse cx="9.8" cy="4" rx="3.4" ry="3.1" fill="none" stroke="#5a5a5a" stroke-width="1.2"/><rect x="4" y="3.2" width="6" height="1.7" fill="#2e2e2e"/></svg>
<svg class="a" style="left:230px;top:778px" width="15" height="9" viewBox="0 0 15 9"><ellipse cx="4.2" cy="4" rx="3.4" ry="3.1" fill="#d4d4d4" stroke="#5a5a5a" stroke-width="1.2"/><ellipse cx="9.8" cy="4" rx="3.4" ry="3.1" fill="none" stroke="#5a5a5a" stroke-width="1.2"/><rect x="4" y="3.2" width="6" height="1.7" fill="#2e2e2e"/></svg>
<svg class="a" style="left:322px;top:775px" width="17" height="17" viewBox="0 0 17 17"><rect x="1.5" y="1.5" width="10.5" height="10" fill="#d6ecfc" stroke="#62b0c0"/><path d="M1 1.5h11.5" stroke="#2f5fd0" stroke-width="1.4"/><path d="M4 4.5h7M4 6.5h7M4 8.5h7" stroke="#fff" stroke-width="1"/><circle cx="3.5" cy="4.5" r=".8" fill="#3a78d8"/><circle cx="3.5" cy="6.5" r=".8" fill="#3a78d8"/><circle cx="3.5" cy="8.5" r=".8" fill="#3a78d8"/><g transform="translate(4,8)"><ellipse cx="4.2" cy="4" rx="3.4" ry="3.1" fill="#d4d4d4" stroke="#5a5a5a" stroke-width="1.2"/><ellipse cx="9.8" cy="4" rx="3.4" ry="3.1" fill="none" stroke="#5a5a5a" stroke-width="1.2"/><rect x="4" y="3.2" width="6" height="1.7" fill="#2e2e2e"/></g></svg>
<div class="a" style="left:494px;top:190px;width:195px;height:436px;background:rgba(0,0,0,.10)"></div>
<div class="a" style="left:493px;top:189px;width:195px;height:436px;background:#fff;border:1px solid #cccccc"></div>
<div class="t" style="left:527px;top:197px;font-size:12px;color:#1a1a1a;transform:scaleX(0.9658);transform-origin:0 0;">E-Mail senden an</div>
<div class="mar" style="left:671px;top:199px"></div>
<div class="t" style="left:527px;top:221px;font-size:12px;color:#1a1a1a;transform:scaleX(0.9928);transform-origin:0 0;">TelephoneGroup</div>
<div class="mar" style="left:671px;top:223px"></div>
<div class="t" style="left:527px;top:245px;font-size:12px;color:#1a1a1a;">Archivierte Dokumente</div>
<div class="mar" style="left:671px;top:247px"></div>
<div class="t" style="left:527px;top:269px;font-size:12px;color:#1a1a1a;transform:scaleX(0.9623);transform-origin:0 0;">Drucken</div>
<div class="t" style="left:527px;top:293px;font-size:12px;color:#1a1a1a;transform:scaleX(0.9715);transform-origin:0 0;">In cs Job öffnen</div>
<div class="t" style="left:527px;top:317px;font-size:12px;color:#1a1a1a;transform:scaleX(0.9920);transform-origin:0 0;">An Telematik senden</div>
<div class="t" style="left:527px;top:341px;font-size:12px;color:#1a1a1a;transform:scaleX(0.9473);transform-origin:0 0;">An SCAN senden</div>
<div class="t" style="left:527px;top:365px;font-size:12px;color:#1a1a1a;transform:scaleX(1.0381);transform-origin:0 0;">Multi-Dispo</div>
<div class="t" style="left:527px;top:389px;font-size:12px;color:#1a1a1a;transform:scaleX(1.0173);transform-origin:0 0;">Autodispo</div>
<div class="t" style="left:527px;top:413px;font-size:12px;color:#1a1a1a;transform:scaleX(1.0581);transform-origin:0 0;">Tour</div>
<div class="mar" style="left:671px;top:415px"></div>
<div class="t" style="left:527px;top:437px;font-size:12px;color:#1a1a1a;">Container</div>
<div class="mar" style="left:671px;top:439px"></div>
<div class="t" style="left:527px;top:461px;font-size:12px;color:#1a1a1a;transform:scaleX(1.0256);transform-origin:0 0;">Kommunikationslog</div>
<div class="t" style="left:527px;top:485px;font-size:12px;color:#1a1a1a;transform:scaleX(0.9502);transform-origin:0 0;">Kosten</div>
<div class="mar" style="left:671px;top:487px"></div>
<div class="t" style="left:527px;top:509px;font-size:12px;color:#1a1a1a;transform:scaleX(1.0365);transform-origin:0 0;">Splitten / Auf-/Absatteln</div>
<div class="mar" style="left:671px;top:511px"></div>
<div class="a" style="left:495px;top:527px;width:191px;height:24px;background:#d9e7f9"></div>
<div class="t" style="left:527px;top:533px;font-size:12px;color:#1a1a1a;transform:scaleX(0.9497);transform-origin:0 0;">Fahrt</div>
<div class="mar" style="left:671px;top:535px"></div>
<div class="t" style="left:527px;top:557px;font-size:12px;color:#1a1a1a;transform:scaleX(1.0197);transform-origin:0 0;">Standard- + Multivortrag</div>
<div class="t" style="left:527px;top:581px;font-size:12px;color:#1a1a1a;transform:scaleX(0.9882);transform-origin:0 0;">In Live Dispo öffnen</div>
<div class="t" style="left:527px;top:605px;font-size:12px;color:#1a1a1a;transform:scaleX(1.0344);transform-origin:0 0;">Aktion</div>
<div class="mar" style="left:671px;top:607px"></div>
<div class="a" style="left:689px;top:528px;width:244px;height:148px;background:rgba(0,0,0,.10)"></div>
<div class="a" style="left:688px;top:527px;width:244px;height:148px;background:#fff;border:1px solid #cccccc"></div>
<div class="t" style="left:722px;top:535px;font-size:12px;color:#1a1a1a;transform:scaleX(0.9734);transform-origin:0 0;">Fehlende Auftragsdaten ergänzen</div>
<div class="t" style="left:722px;top:559px;font-size:12px;color:#1a1a1a;transform:scaleX(0.9758);transform-origin:0 0;">Auftragsdaten ergänzen</div>
<div class="t" style="left:722px;top:583px;font-size:12px;color:#1a1a1a;transform:scaleX(0.9675);transform-origin:0 0;">Fahrt bearbeiten</div>
<div class="t" style="left:722px;top:607px;font-size:12px;color:#1a1a1a;transform:scaleX(0.9676);transform-origin:0 0;">Fahrt(en) löschen</div>
<div class="t" style="left:722px;top:631px;font-size:12px;color:#1a1a1a;transform:scaleX(0.9603);transform-origin:0 0;">Live Dispo: Fahrten tauschen</div>
<div class="t" style="left:722px;top:655px;font-size:12px;color:#1a1a1a;transform:scaleX(0.9735);transform-origin:0 0;">Zeiten/Einschränkungen anpassen</div>
<div class="a" style="left:706px;top:646px;width:209px;height:28px;border:5px solid #e8772a;border-radius:4px"></div>
</body></html>
